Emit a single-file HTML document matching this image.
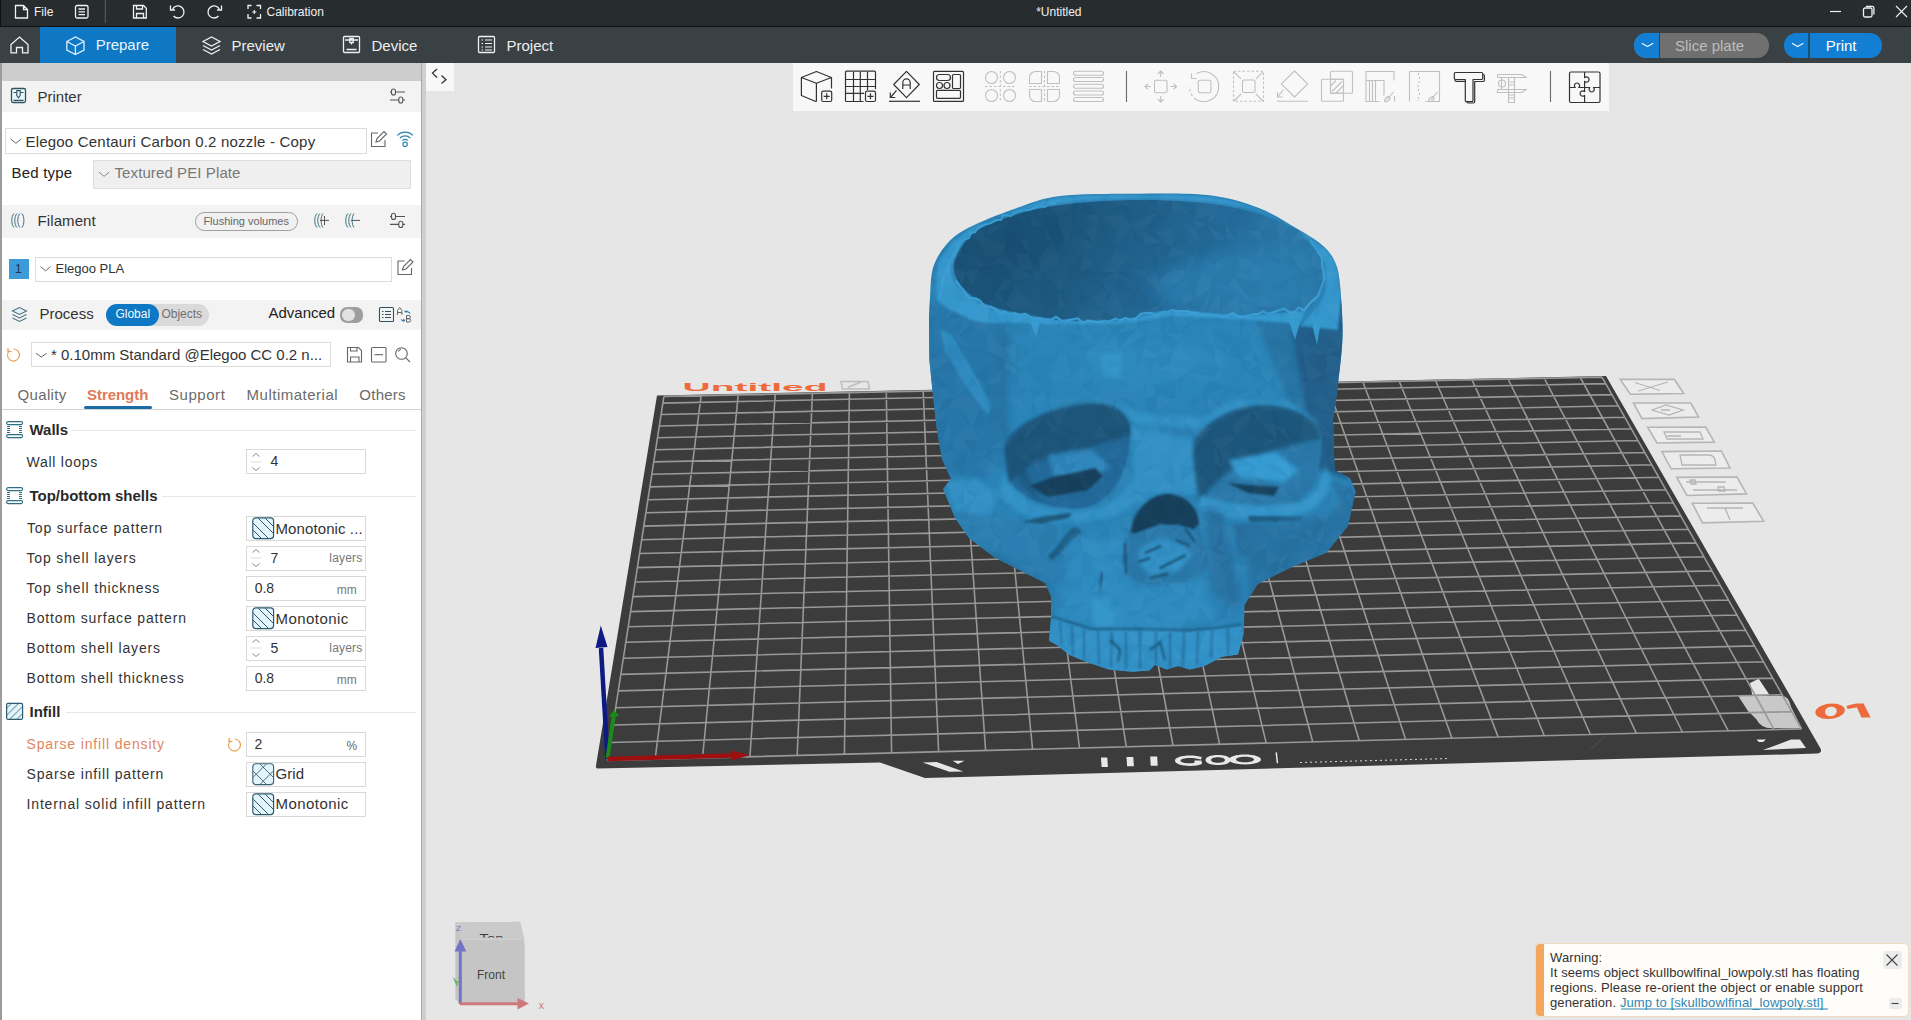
<!DOCTYPE html>
<html><head><meta charset="utf-8"><style>
*{margin:0;padding:0;box-sizing:border-box}
html,body{width:1911px;height:1020px;overflow:hidden;background:#e6e6e6;font-family:"Liberation Sans",sans-serif}
.a{position:absolute}
.t{position:absolute;line-height:1;white-space:nowrap}
svg{position:absolute;overflow:visible}
</style></head><body>
<!-- title bar -->
<div class="a" style="left:0;top:0;width:1911px;height:26px;background:#272c2f"></div>
<div class="a" style="left:0;top:25.5px;width:1911px;height:1.5px;background:#0d0f10"></div>
<div class="a" style="left:0;top:0;width:1px;height:26px;background:#111"></div>
<svg style="left:0;top:0" width="1911" height="26" fill="none" stroke="#f2f2f2" stroke-width="1.3">
  <!-- file -->
  <path d="M15.5 5.5h8l4 4v8.5h-12z M23.5 5.5v4h4"/>
  <!-- menu -->
  <rect x="75.5" y="5.5" width="12.5" height="12.5" rx="1.5"/>
  <path d="M78.5 9h6.5M78.5 11.8h6.5M78.5 14.6h6.5"/>
  <path d="M105.3 0v23" stroke="#5a5f62" stroke-width="1"/>
  <!-- save -->
  <path d="M133.5 5.5h10l2.8 2.8v9.7h-12.8z M136.5 5.5v3.5h6v-3.5 M136.5 18v-4.5h7v4.5"/>
  <!-- undo -->
  <path d="M172.5 9.5a6 6 0 1 1 1 6.5"/><path d="M170.5 5.5v4.5h4.5"/>
  <!-- redo -->
  <path d="M219.5 9.5a6 6 0 1 0 -1 6.5"/><path d="M221.5 5.5v4.5h-4.5"/>
  <!-- calibration -->
  <path d="M248 9v-3.5h3.5M256.5 5.5h4v3.5M260.5 14v4h-4M251.5 18h-3.5v-4"/>
  <path d="M254.3 10v4M252.3 12h4" stroke-width="1.1"/>
  <!-- window controls -->
  <path d="M1830 11.5h11" stroke-width="1.2"/>
  <rect x="1863.5" y="8" width="8.5" height="9" rx="1.5"/>
  <path d="M1866 6.3h6.3a1.6 1.6 0 0 1 1.6 1.6v6.6"/>
  <path d="M1896 6l11 11M1907 6l-11 11" stroke-width="1.1"/>
</svg>
<div class="t" style="left:34px;top:5.84px;font-size:12px;color:#f2f2f2;">File</div>

<div class="t" style="left:266.5px;top:5.84px;font-size:12px;color:#f2f2f2;">Calibration</div>

<div class="t" style="left:1036.2px;top:5.84px;font-size:12px;color:#f2f2f2;">*Untitled</div>

<!-- tab bar -->
<div class="a" style="left:0;top:27px;width:1911px;height:36px;background:#394145"></div>
<div class="a" style="left:40px;top:27px;width:136px;height:36px;background:#0f78c4"></div>
<svg style="left:0;top:27px" width="1911" height="36" fill="none" stroke="#f0f0f0" stroke-width="1.3">
  <!-- home -->
  <path d="M11 25.8v-8.3l8.5-7.5 8.5 7.5v8.3h-5.5v-5.3h-6v5.3z"/>
  <!-- prepare cube -->
  <path d="M66.8 14.5l8.6-4.5 8.6 4.5v8.5l-8.6 4.5-8.6-4.5z M66.8 14.5l8.6 4.5 8.6-4.5 M75.4 19v8.5" stroke="#d8f0ff"/>
  <!-- preview layers -->
  <path d="M203 14.5l8.5-4.5 8.5 4.5-8.5 4.5z M203 18.5l8.5 4.5 8.5-4.5 M203 22.5l8.5 4.5 8.5-4.5"/>
  <!-- device -->
  <rect x="343.5" y="9.5" width="16" height="16" rx="1"/>
  <path d="M346.5 22.5h10 M345 13h13 M349.8 11.5h3.4v4h-3.4z M351.5 15.5v2"/>
  <!-- project -->
  <rect x="478.5" y="9.5" width="16" height="16" rx="1"/>
  <path d="M481.5 13h1.5M485 13h7M481.5 16.5h1.5M485 16.5h7M481.5 20h1.5M485 20h7M481.5 23h1.5M485 23h7" stroke-width="1.1"/>
</svg>
<div class="t" style="left:95.7px;top:36.90px;font-size:15px;color:#e6f6ff;">Prepare</div>

<div class="t" style="left:231.5px;top:37.60px;font-size:15px;color:#eeeeee;">Preview</div>

<div class="t" style="left:371.5px;top:37.60px;font-size:15px;color:#eeeeee;">Device</div>

<div class="t" style="left:506.5px;top:37.60px;font-size:15px;color:#eeeeee;">Project</div>

<!-- slice / print buttons -->
<div class="a" style="left:1634px;top:33px;width:135px;height:24.5px;border-radius:12.25px;background:#707070;overflow:hidden">
  <div class="a" style="left:0;top:0;width:24.5px;height:24.5px;background:#127fd4"></div>
  <div class="a" style="left:24.5px;top:0;width:1.5px;height:24.5px;background:#394145"></div>
</div>
<div class="a" style="left:1784px;top:33px;width:98px;height:24.5px;border-radius:12.25px;background:#127fd4;overflow:hidden">
  <div class="a" style="left:24px;top:0;width:1.5px;height:24.5px;background:#1e4e70"></div>
</div>
<svg style="left:0;top:0" width="1911" height="63" fill="none" stroke="#e8f4ff" stroke-width="1.2">
  <path d="M1641.8 43.3l5.7 3.2 5.7-3.2M1792 43.3l5.7 3.2 5.7-3.2"/>
</svg>
<div class="t" style="left:1675px;top:37.60px;font-size:15px;color:#bdbdbd;">Slice plate</div>

<div class="t" style="left:1825.7px;top:37.60px;font-size:15px;color:#ffffff;">Print</div>

<!-- left panel -->
<div class="a" style="left:0;top:63px;width:421px;height:957px;background:#ffffff"></div>
<div class="a" style="left:0;top:63px;width:1.5px;height:957px;background:#9c9c9c"></div>
<div class="a" style="left:421px;top:63px;width:1.3px;height:957px;background:#a9a9a9"></div>
<div class="a" style="left:422.3px;top:63px;width:3.7px;height:957px;background:#cfcfcf"></div>
<div class="a" style="left:1.5px;top:63px;width:419.5px;height:18.3px;background:#cdcdcd"></div>
<!-- headers -->
<div class="a" style="left:1.5px;top:81.3px;width:419.5px;height:30.7px;background:#f3f3f3"></div>
<div class="a" style="left:1.5px;top:205.3px;width:419.5px;height:32.3px;background:#f3f3f3"></div>
<div class="a" style="left:1.5px;top:300px;width:419.5px;height:30.2px;background:#f3f3f3"></div>
<!-- printer combo -->
<div class="a" style="left:4.5px;top:128.2px;width:362.3px;height:25.6px;border:1px solid #dcdcdc;background:#fff"></div>
<div class="a" style="left:93px;top:159.5px;width:317.7px;height:29.1px;border:1px solid #dedede;background:#efefef"></div>
<!-- flushing pill -->
<div class="a" style="left:195px;top:212.2px;width:102.7px;height:18.5px;border:1px solid #a0a0a0;border-radius:9.25px;background:#f1f1f1"></div>
<!-- filament combo -->
<div class="a" style="left:9px;top:259.3px;width:20px;height:19.4px;background:#3c9bd8"></div>
<div class="a" style="left:34.5px;top:256.5px;width:357.3px;height:25px;border:1px solid #dcdcdc;background:#fff"></div>
<!-- global/objects toggle -->
<div class="a" style="left:106px;top:304.1px;width:102.5px;height:22px;border-radius:11px;background:#dadada"></div>
<div class="a" style="left:106px;top:304.1px;width:52.5px;height:22px;border-radius:11px;background:#0f78c4"></div>
<!-- advanced switch -->
<div class="a" style="left:340px;top:307px;width:23px;height:16px;border-radius:7px;background:#9e9e9e"></div>
<div class="a" style="left:342px;top:309px;width:12.5px;height:12px;border-radius:6px;background:#e2e2e2"></div>
<!-- preset combo -->
<div class="a" style="left:30.5px;top:342.4px;width:300.2px;height:24.9px;border:1px solid #dcdcdc;background:#fff"></div>
<!-- tabs -->
<div class="a" style="left:2px;top:409px;width:419px;height:1.2px;background:#d2d2d2"></div>
<div class="a" style="left:84px;top:406.2px;width:67.8px;height:3.2px;border-radius:1.6px;background:#1b6da8"></div>
<!-- section separators -->
<div class="a" style="left:72px;top:430px;width:344px;height:1px;background:#e8e8e8"></div>
<div class="a" style="left:162px;top:496px;width:254px;height:1px;background:#e8e8e8"></div>
<div class="a" style="left:66px;top:711.5px;width:350px;height:1px;background:#e8e8e8"></div>
<!-- inputs -->
<div class="a" style="left:246.3px;top:449.3px;width:119.5px;height:25px;border:1px solid #d9d9d9"></div>
<div class="a" style="left:246.3px;top:515.5px;width:119.5px;height:25px;border:1px solid #d9d9d9"></div>
<div class="a" style="left:246.3px;top:545.5px;width:119.5px;height:25px;border:1px solid #d9d9d9"></div>
<div class="a" style="left:246.3px;top:575.5px;width:119.5px;height:25px;border:1px solid #d9d9d9"></div>
<div class="a" style="left:246.3px;top:605.5px;width:119.5px;height:25px;border:1px solid #d9d9d9"></div>
<div class="a" style="left:246.3px;top:635.5px;width:119.5px;height:25px;border:1px solid #d9d9d9"></div>
<div class="a" style="left:246.3px;top:665.5px;width:119.5px;height:25px;border:1px solid #d9d9d9"></div>
<div class="a" style="left:246.3px;top:731.5px;width:119.5px;height:25px;border:1px solid #d9d9d9"></div>
<div class="a" style="left:246.3px;top:761.5px;width:119.5px;height:25px;border:1px solid #d9d9d9"></div>
<div class="a" style="left:246.3px;top:791.5px;width:119.5px;height:25px;border:1px solid #d9d9d9"></div>
<svg style="left:0;top:0" width="430" height="1020" fill="none" stroke-width="1.2">
  <defs>
    <pattern id="hatch" width="5" height="5" patternUnits="userSpaceOnUse" patternTransform="rotate(45)">
      <rect width="5" height="5" fill="#e3f5fc"/><path d="M0 0v5" stroke="#2f5a6e" stroke-width="1.1"/>
    </pattern>
    <g id="pat_mono">
      <rect x="0.6" y="0.6" width="20.8" height="20.8" rx="3" fill="#e3f5fc" stroke="#2f5a6e" stroke-width="1.2"/>
      <path d="M1 6l15 15M1 13l8 8M6 1l15 15M13 1l8 8" stroke="#2f5a6e" stroke-width="1"/>
    </g>
    <g id="pat_grid">
      <rect x="0.6" y="0.6" width="20.8" height="20.8" rx="3" fill="#e3f5fc" stroke="#3d6070" stroke-width="1.1"/>
      <path d="M1 8l13 13M8 1l13 13M1 14l13-13M8 21l13-13" stroke="#3d6070" stroke-width="0.9"/>
    </g>
    <g id="spin">
      <path d="M0 4l3.5-3 3.5 3M0 15l3.5 3 3.5-3" stroke="#8a8a8a" stroke-width="1"/>
      <path d="M-2 9.5h11" stroke="#d8d8d8" stroke-width="1"/>
    </g>
    <g id="secicon">
      <rect x="0.6" y="0.6" width="16" height="3" rx="1.5" stroke="#2d6f82" stroke-width="1.1"/>
      <rect x="0.6" y="13.6" width="16" height="3" rx="1.5" stroke="#2d6f82" stroke-width="1.1"/>
      <path d="M1 5.5h3M1 7.5h3M1 9.5h3M1 11.5h3M13 5.5h3M13 7.5h3M13 9.5h3M13 11.5h3" stroke="#2d6f82" stroke-width="1"/>
    </g>
  </defs>
  <!-- printer icon -->
  <rect x="11.5" y="88.5" width="14" height="14" rx="1.5" fill="#e8f6fb" stroke="#2f5361" stroke-width="1.3"/>
  <path d="M13.5 92.5h3M20.5 92.5h3M13.5 100.4h10" stroke="#2f5361" stroke-width="1.1"/>
  <path d="M16.8 90.6h3.4v5l-1.7 2.3-1.7-2.3z" stroke="#2f5361" stroke-width="1.1" fill="#e8f6fb"/>
  <!-- sliders -->
  <g stroke="#555" stroke-width="1.1">
    <path d="M390 92h15M390 100h15"/><rect x="391.5" y="89" width="4" height="6" rx="2" fill="#f3f3f3"/><rect x="398.8" y="97" width="4" height="6" rx="2" fill="#f3f3f3"/>
    <path d="M390 216.5h15M390 224.4h15"/><rect x="391.5" y="213.2" width="4" height="6.3" rx="2" fill="#f3f3f3"/><rect x="398.8" y="221.2" width="4" height="6.3" rx="2" fill="#f3f3f3"/>
  </g>
  <!-- edit icons -->
  <g stroke="#666" stroke-width="1.1">
    <path d="M378 133h-6.5v13.5h13.5v-6.5"/><path d="M376 142l1-3.5 7-7 2.5 2.5-7 7z"/>
    <path d="M404.5 261h-6.5v13.5h13.5v-6.5"/><path d="M402.5 270l1-3.5 7-7 2.5 2.5-7 7z"/>
  </g>
  <!-- wifi -->
  <g stroke="#2e86b0" stroke-width="1.2">
    <path d="M397.3 135.3a11 11 0 0 1 15.6 0M399.9 138a7.4 7.4 0 0 1 10.4 0M402.4 140.6a3.8 3.8 0 0 1 5.4 0"/>
    <circle cx="405.1" cy="144.3" r="2.2"/>
  </g>
  <!-- combo chevrons -->
  <g stroke="#666" stroke-width="1">
    <path d="M10.6 139l5.3 4.3 5.3-4.3"/>
    <path d="M98.8 172l5.3 4.3 5.3-4.3" stroke="#888"/>
    <path d="M40.5 266.6l5 4.2 5-4.2"/>
    <path d="M36 353.3l5.3 3.7 5.3-3.7"/>
  </g>
  <!-- filament icon -->
  <g stroke="#3a6f80" stroke-width="1">
    <path d="M14 213.5c-3 3-3 11 0 14M17 213.5c-3 3-3 11 0 14M20 213.5c-3 3-3 11 0 14M22 213.5c2.5 3 2.5 11 0 14"/>
    <path d="M317 213.5c-3 3-3 11 0 14M320 213.5c-3 3-3 11 0 14M323 213.5c-2.5 3-2.5 11 0 14" />
    <path d="M320 220.4h9M324.5 216v9" stroke="#555"/>
    <path d="M348 213.5c-3 3-3 11 0 14M351 213.5c-3 3-3 11 0 14M354 213.5c-2.5 3-2.5 11 0 14"/>
    <path d="M351 220.4h9" stroke="#555"/>
  </g>
  <!-- process icon -->
  <g stroke="#4d6f7c" stroke-width="1.1">
    <path d="M12.5 311l7-3.5 7 3.5-7 3.5z" fill="#e3f5fc"/><path d="M12.5 314.5l7 3.5 7-3.5M12.5 318l7 3.5 7-3.5"/>
  </g>
  <!-- list / AB icons -->
  <g stroke="#2f5361" stroke-width="1.1">
    <rect x="379.5" y="307.5" width="14" height="14" rx="1"/>
    <path d="M382 311.5h1.5M385 311.5h6M382 314.5h1.5M385 314.5h6M382 317.5h1.5M385 317.5h6"/>
  </g>
  <g stroke="#1e7bb0" stroke-width="1.1"><path d="M406 312a3 3 0 0 1 4 1.5M404.5 311l1.5 1 1-1.5M401 319.5a3 3 0 0 0 3.5 1M403 321.5l1.5-1-1.2-1.5"/></g>
  <g stroke="#666" stroke-width="1"><path d="M397.5 315v-4.5l2.2-3 2.2 3v4.5M397.5 312.5h4.4"/><path d="M406.5 315.5v6.5h2.5a1.6 1.6 0 0 0 0-3.3h-2.5h2.3a1.5 1.5 0 0 0 0-3.2z"/></g>
  <!-- preset reset icon -->
  <g stroke="#e8a050" stroke-width="1.2"><path d="M9.5 350.5a6 6 0 1 0 4-1.5"/><path d="M8 348v3.5h3.5"/></g>
  <g stroke="#666" stroke-width="1.1">
    <path d="M347.5 347.5h11l3 3v11.5h-14z M350.5 347.5v3.5h6.5v-3.5 M350.5 362v-5h8.5v5"/>
    <rect x="371.5" y="347.5" width="14.5" height="14.5" rx="1"/><path d="M374.5 354.7h8.5"/>
    <circle cx="401.5" cy="353.5" r="5.8"/><path d="M405.8 357.8l4.2 4.2M398.5 351.5a3.5 3.5 0 0 1 2.5-2"/>
  </g>
  <!-- section icons -->
  <use href="#secicon" x="6" y="421"/>
  <use href="#secicon" x="6" y="487"/>
  <rect x="6.6" y="703.4" width="16" height="16" rx="1.5" fill="url(#hatch)" stroke="#2f5a6e" stroke-width="1.2"/>
  <!-- spinners -->
  <use href="#spin" x="252.5" y="452.5"/>
  <use href="#spin" x="252.5" y="548.5"/>
  <use href="#spin" x="252.5" y="638.5"/>
  <!-- pattern icons -->
  <use href="#pat_mono" x="252.2" y="517.2"/>
  <use href="#pat_mono" x="252.2" y="607.2"/>
  <use href="#pat_grid" x="252.2" y="763.2"/>
  <use href="#pat_mono" x="252.2" y="793.2"/>
  <!-- sparse reset -->
  <g stroke="#e8a050" stroke-width="1.2"><path d="M230.5 740.5a6 6 0 1 0 4-1.5"/><path d="M229 738v3.5h3.5"/></g>
</svg>
<div class="t" style="left:37.5px;top:88.50px;font-size:15px;color:#333;">Printer</div>

<div class="t" style="left:25.5px;top:133.50px;font-size:15px;color:#333;letter-spacing:0.2px;">Elegoo Centauri Carbon 0.2 nozzle - Copy</div>

<div class="t" style="left:11.5px;top:165.10px;font-size:15px;color:#222;letter-spacing:0.2px;">Bed type</div>

<div class="t" style="left:114.5px;top:165.10px;font-size:15px;color:#777;letter-spacing:0.1px;">Textured PEI Plate</div>

<div class="t" style="left:37.5px;top:213.20px;font-size:15px;color:#333;letter-spacing:0.1px;">Filament</div>

<div class="t" style="left:203.4px;top:215.69px;font-size:11px;color:#666;">Flushing volumes</div>

<div class="t" style="left:15px;top:263.34px;font-size:12px;color:#1a3550;">1</div>

<div class="t" style="left:55.5px;top:262.00px;font-size:13px;color:#333;">Elegoo PLA</div>

<div class="t" style="left:39.5px;top:305.90px;font-size:15px;color:#333;">Process</div>

<div class="t" style="left:115.4px;top:308.44px;font-size:12px;color:#f2f8ff;">Global</div>

<div class="t" style="left:161.4px;top:308.44px;font-size:12px;color:#707070;">Objects</div>

<div class="t" style="left:268.5px;top:305.30px;font-size:15px;color:#222;">Advanced</div>

<div class="t" style="left:51px;top:347.30px;font-size:15px;color:#333;">* 0.10mm Standard @Elegoo CC 0.2 n...</div>

<div class="t" style="left:17.5px;top:387.30px;font-size:15px;color:#6b6b6b;letter-spacing:0.35px;">Quality</div>

<div class="t" style="left:87px;top:387.30px;font-size:15px;color:#e07a5a;font-weight:bold;letter-spacing:-0.05px;">Strength</div>

<div class="t" style="left:169px;top:387.30px;font-size:15px;color:#6b6b6b;letter-spacing:0.55px;">Support</div>

<div class="t" style="left:246.6px;top:387.30px;font-size:15px;color:#6b6b6b;letter-spacing:0.5px;">Multimaterial</div>

<div class="t" style="left:359.3px;top:387.30px;font-size:15px;color:#6b6b6b;letter-spacing:0.25px;">Others</div>

<div class="t" style="left:29.5px;top:422.30px;font-size:15px;color:#2a2a2a;font-weight:bold;">Walls</div>

<div class="t" style="left:26.5px;top:454.95px;font-size:14px;color:#333;letter-spacing:0.75px;">Wall loops</div>

<div class="t" style="left:270.5px;top:454.25px;font-size:14px;color:#333;">4</div>

<div class="t" style="left:29.5px;top:487.70px;font-size:15px;color:#2a2a2a;font-weight:bold;">Top/bottom shells</div>

<div class="t" style="left:27px;top:520.75px;font-size:14px;color:#333;letter-spacing:0.85px;">Top surface pattern</div>

<div class="t" style="left:275.5px;top:520.70px;font-size:15px;color:#333;letter-spacing:0.1px;">Monotonic ...</div>

<div class="t" style="left:26.5px;top:550.75px;font-size:14px;color:#333;letter-spacing:0.85px;">Top shell layers</div>

<div class="t" style="left:270.5px;top:551.05px;font-size:14px;color:#333;">7</div>

<div class="t" style="left:329.3px;top:551.84px;font-size:12px;color:#777;letter-spacing:0.2px;">layers</div>

<div class="t" style="left:26.5px;top:580.75px;font-size:14px;color:#333;letter-spacing:0.85px;">Top shell thickness</div>

<div class="t" style="left:254.7px;top:580.85px;font-size:14px;color:#333;">0.8</div>

<div class="t" style="left:336.7px;top:583.84px;font-size:12px;color:#777;">mm</div>

<div class="t" style="left:26.5px;top:610.75px;font-size:14px;color:#333;letter-spacing:0.85px;">Bottom surface pattern</div>

<div class="t" style="left:275.5px;top:610.70px;font-size:15px;color:#333;letter-spacing:0.45px;">Monotonic</div>

<div class="t" style="left:26.5px;top:640.75px;font-size:14px;color:#333;letter-spacing:0.85px;">Bottom shell layers</div>

<div class="t" style="left:270.5px;top:641.05px;font-size:14px;color:#333;">5</div>

<div class="t" style="left:329.3px;top:641.84px;font-size:12px;color:#777;letter-spacing:0.2px;">layers</div>

<div class="t" style="left:26.5px;top:670.75px;font-size:14px;color:#333;letter-spacing:0.85px;">Bottom shell thickness</div>

<div class="t" style="left:254.7px;top:670.85px;font-size:14px;color:#333;">0.8</div>

<div class="t" style="left:336.7px;top:673.84px;font-size:12px;color:#777;">mm</div>

<div class="t" style="left:29.5px;top:703.80px;font-size:15px;color:#2a2a2a;font-weight:bold;">Infill</div>

<div class="t" style="left:26.5px;top:736.55px;font-size:14px;color:#e0865e;letter-spacing:0.85px;">Sparse infill density</div>

<div class="t" style="left:254.5px;top:736.55px;font-size:14px;color:#333;">2</div>

<div class="t" style="left:346.5px;top:739.64px;font-size:12px;color:#666;">%</div>

<div class="t" style="left:26.5px;top:766.75px;font-size:14px;color:#333;letter-spacing:0.85px;">Sparse infill pattern</div>

<div class="t" style="left:275.5px;top:765.90px;font-size:15px;color:#333;letter-spacing:0.1px;">Grid</div>

<div class="t" style="left:26.5px;top:796.55px;font-size:14px;color:#333;letter-spacing:0.85px;">Internal solid infill pattern</div>

<div class="t" style="left:275.5px;top:795.90px;font-size:15px;color:#333;letter-spacing:0.45px;">Monotonic</div>

<!-- collapse button -->
<div class="a" style="left:426px;top:63px;width:28px;height:28px;background:#f8f8f8"></div>
<svg style="left:0;top:0" width="1911" height="1020" fill="none">
  <path d="M437 69l-4.5 4.1 4.5 4.4M441.5 75.5l4.5 4.3-4.5 3.7" stroke="#333" stroke-width="1.3"/>
</svg>
<!-- toolbar -->
<div class="a" style="left:793px;top:63px;width:816px;height:47.7px;background:#f8f8f8"></div>
<svg style="left:0;top:0" width="1911" height="120" fill="none" stroke-width="1.2" stroke-linejoin="round">
  <g stroke="#333">
    <!-- add cube -->
    <path d="M816.4 71.5l-15 6v18l15 6.2 M801.4 77.5l15 5.8 15-5.8-15-6 M816.4 83.3v18.2 M831.5 77.5v11"/>
    <rect x="821.7" y="91.2" width="10" height="10.3" rx="1.5"/><path d="M826.7 93.3v6M823.7 96.3h6"/>
    <!-- add plate -->
    <path d="M863.5 101.5h-17a1 1 0 0 1-1-1v-28.3a1 1 0 0 1 1-1h28a1 1 0 0 1 1 1v17"/>
    <path d="M853.5 72v29M860.3 72v29M867.5 72v18M846 79.5h29M846 86.5h29M846 93.3h18"/>
    <rect x="865.5" y="91.2" width="10" height="10.3" rx="1.5"/><path d="M870.5 93.3v6M867.5 96.3h6"/>
    <!-- auto orient -->
    <path d="M906.5 71.3l12.8 13.2-12.8 13.2-12.8-13.2z"/>
    <path d="M902.8 89v-6.5a3.7 3.7 0 0 1 7.4 0v6.5M902.8 85h7.4"/>
    <path d="M896.5 90.3l-6 7.2M890.3 92.5v5h5"/><path d="M889 101.3h31"/>
    <!-- arrange -->
    <rect x="933.5" y="71.4" width="30" height="30" rx="1"/>
    <rect x="936.5" y="74.5" width="14" height="6" rx="3"/><rect x="952.5" y="74.5" width="8" height="14" rx="1"/>
    <circle cx="939.5" cy="85.5" r="3"/><circle cx="947" cy="85.5" r="3"/><rect x="936.5" y="90.3" width="24" height="8" rx="1"/>
    <!-- separators -->
    <path d="M1126.5 71v31M1550.5 71v31" stroke="#6a6a6a" stroke-width="1.1"/>
  </g>
  <g stroke="#c0c0c0" stroke-width="1.1">
    <!-- split objects -->
    <circle cx="991.5" cy="77.5" r="6"/><circle cx="1009.5" cy="77.5" r="6"/><circle cx="991.5" cy="95.5" r="6"/><circle cx="1009.5" cy="95.5" r="6"/>
    <path d="M1000.3 71v31M985 86.5h31" stroke-dasharray="2.5 2"/>
    <!-- split parts -->
    <path d="M1041.5 71.5h-6a6 6 0 0 0-6 6v6h12zM1047.5 71.5h6a6 6 0 0 1 6 6v6h-12zM1041.5 101.5h-6a6 6 0 0 1-6-6v-6h12zM1047.5 101.5h6a6 6 0 0 0 6-6v-6h-12z"/>
    <path d="M1044.5 71v31M1029 86.5h31" stroke-dasharray="2.5 2"/>
    <!-- layers -->
    <rect x="1073.5" y="71.3" width="30" height="4" rx="2"/><rect x="1073.5" y="77.5" width="30" height="4" rx="2"/><rect x="1073.5" y="84.3" width="30" height="4" rx="2"/><rect x="1073.5" y="91" width="30" height="4" rx="2"/><rect x="1073.5" y="97.5" width="30" height="4" rx="2"/>
    <!-- move -->
    <rect x="1154.5" y="80.2" width="12.5" height="12.5" rx="1.5"/>
    <path d="M1160.7 77v-6M1157.8 74l2.9-3 2.9 3M1160.7 96v6M1157.8 99l2.9 3 2.9-3M1151 86.5h-6M1148 83.6l-3 2.9 3 2.9M1170.5 86.5h6M1173.5 83.6l3 2.9-3 2.9"/>
    <!-- rotate -->
    <rect x="1198.3" y="80.2" width="12.6" height="12.5" rx="1.5"/>
    <path d="M1196.5 73.5A15 15 0 1 1 1196 99.5"/><path d="M1196 99.5A15 15 0 0 1 1189.6 86" stroke-dasharray="2.5 2.5"/><path d="M1191.5 73.5v5h5"/>
    <!-- scale -->
    <rect x="1242.5" y="80" width="12.5" height="12.5" rx="1.5"/>
    <rect x="1233.5" y="71.3" width="30" height="30" stroke-dasharray="2.5 2"/>
    <path d="M1234 71.8l7 7M1263 71.8l-7 7M1234 101l7-7M1263 101l-7-7"/>
    <!-- lay on face -->
    <path d="M1294.5 71l13.2 12.8-13.2 13.2-13.2-13.2z"/><path d="M1283.5 89.5l-6 7.5M1277.5 92v5h5M1277 101.3h31"/>
    <!-- cut -->
    <rect x="1330.5" y="71.3" width="22" height="22" rx="1"/><rect x="1321.5" y="79.3" width="22" height="22" rx="1"/>
    <path d="M1330.5 93.3v-14h13v14z M1332 91.5l10-10M1336 93l7-7M1330.5 86l5.5-5.5"/>
    <!-- support paint -->
    <path d="M1366 101.5v-30h28v9M1366 80.5h18v15M1369.5 81v20.5M1372.5 81v20.5M1375.5 81v20.5M1365.5 101.5h14"/>
    <path d="M1386.5 100l7-8M1384.5 101.5c0-3 2-5 4-5l1.5 1.5c0 2-2 4-5 3.5z"/><path d="M1394.5 96v5.5"/>
    <!-- seam paint -->
    <path d="M1409.5 101.5v-30h30v30h-14M1439.5 92v9.5"/>
    <path d="M1418.5 73v2M1419.5 77v2M1419 81v2M1418 85v2M1418.5 89v2M1419.5 93v2M1418.5 97v2M1418 100v1"/>
    <path d="M1430.5 100l7-8M1428.5 101.5c0-3 2-5 4-5l1.5 1.5c0 2-2 4-5 3.5z"/>
    <!-- measure -->
    <path d="M1497.5 74.5h24l5 3h-29zM1497.5 89.5h29l-5 3h-24zM1501.5 77.5v12M1508.5 77.5v25h6v-25M1508.5 82h6M1508.5 85h6M1508.5 95h6M1508.5 98h6"/>
    <circle cx="1502" cy="83.5" r="3.5"/>
  </g>
  <g stroke="#333" stroke-width="1.2">
    <!-- text T -->
    <path d="M1455.5 72.5h26a1.2 1.2 0 0 1 1.2 1.2v4.6a1.2 1.2 0 0 1-1.2 1.2h-8.5v21a1.2 1.2 0 0 1-1.2 1.2h-5.3a1.2 1.2 0 0 1-1.2-1.2v-21h-9.8a1.2 1.2 0 0 1-1.2-1.2v-4.6a1.2 1.2 0 0 1 1.2-1.2z"/>
    <path d="M1482.7 74.5h.5a1.2 1.2 0 0 1 1.2 1.2v4.6a1.2 1.2 0 0 1-1.2 1.2h-8.5v19.5M1467 101.5v.3a1.2 1.2 0 0 0 1.2 1.2h5.3a1.2 1.2 0 0 0 1.2-1.2v-1.5M1455 79.5v.7a1.2 1.2 0 0 0 1.2 1.2h9.8"/>
    <!-- puzzle -->
    <rect x="1569.5" y="72" width="30.5" height="30.5" rx="1.5"/>
    <path d="M1584.6 72v5.7A2.6 2.6 0 1 1 1584.6 81.3V91.7A2.6 2.6 0 1 0 1584.6 95.3V102.5M1569.5 87.5H1575.2A2.6 2.6 0 1 1 1578.8 87.5H1589.9A2.6 2.6 0 1 0 1593.5 87.5H1600"/>
  </g>
</svg>

<!-- 3D scene -->
<svg style="left:0;top:0" width="1911" height="1020">
  <!-- plate -->
  <path d="M657 395.5L1606 376L1820.5 748.5Q1822.5 753 1817 753.6L925 778L880 762.6L597.5 768.4Q595.5 768.4 596 765.5Z" fill="#3c3c3c"/>
  <path d="M1750 683l8.7-4.3 10.7 16.1h-17.2z" fill="#e6e6e6"/>
  <path d="M1738.2 696h44.2q6 0 8.6 10.7l10.8 21.6h-30.2q-11 0-15-8.7l-8.6-8.6z" fill="#c8c8c8"/>
  <path d="M607.5 760.5L663.9 396.4M655.1 759.3L701.1 395.7M702.5 758.0L738.2 394.9M749.9 756.7L775.3 394.1M797.2 755.5L812.4 393.4M844.4 754.2L849.4 392.6M891.6 753.0L886.3 391.8M938.6 751.7L923.2 391.1M985.6 750.5L960.1 390.3M1032.6 749.3L996.9 389.6M1079.5 748.0L1033.7 388.8M1126.3 746.8L1070.5 388.0M1173.0 745.5L1107.2 387.3M1219.6 744.3L1143.8 386.5M1266.2 743.1L1180.4 385.8M1312.7 741.8L1217.0 385.0M1359.2 740.6L1253.5 384.3M1405.6 739.4L1290.0 383.5M1451.9 738.1L1326.5 382.7M1498.1 736.9L1362.9 382.0M1544.3 735.7L1399.2 381.2M1590.4 734.5L1435.5 380.5M1636.4 733.3L1471.8 379.7M1682.4 732.0L1508.0 379.0M1728.3 730.8L1544.2 378.2M1774.1 729.6L1580.3 377.5M1801.5 728.9L1602.0 377.1M607.5 760.5L1801.5 728.9M610.3 742.5L1791.7 711.6M613.0 725.0L1782.1 694.7M615.7 707.7L1772.7 678.1M618.3 690.9L1763.5 661.8M620.9 674.4L1754.5 645.9M623.4 658.2L1745.6 630.3M625.8 642.3L1736.9 615.0M628.2 626.8L1728.4 600.0M630.6 611.6L1720.1 585.3M632.9 596.6L1711.9 570.9M635.2 582.0L1703.9 556.7M637.4 567.6L1696.0 542.9M639.6 553.5L1688.3 529.2M641.7 539.7L1680.7 515.9M643.8 526.1L1673.3 502.7M645.9 512.8L1666.0 489.8M647.9 499.7L1658.8 477.2M649.9 486.9L1651.7 464.8M651.8 474.3L1644.8 452.5M653.7 461.9L1638.0 440.5M655.6 449.7L1631.3 428.8M657.5 437.8L1624.7 417.2M659.3 426.0L1618.3 405.8M661.1 414.5L1611.9 394.6M662.8 403.1L1605.7 383.6M663.9 396.4L1602.0 377.1" stroke="#989898" stroke-width="1.6" fill="none"/>
  <!-- plate front slots -->
  <path d="M922.6 762.5l14-0.5 26.8 9.5-14 0.3z M952.6 760.8h11.9l-6.5 3.2z" fill="#e8e8e8"/>
  <path d="M1763 750L1791 739.5L1800 739.5L1806 748Z M1756.5 739.5h9.5l-3 2.5h-4z" fill="#e8e8e8"/>
  <!-- ELEGOO letters -->
  <g fill="#e8e8e8">
    <path d="M1101 757.5h6.3l.6 9.5h-6.3z M1126.5 757h6.8l.6 9.3h-6.8z M1150.2 756.5h7l.5 9.3h-7z"/>
    <path d="M1190 755.5c-9 0-15 2.2-15 5.2s6 5.2 15 5.2c5 0 9-.8 12-2l-.5-3.5h-7v2.3c-1.3.4-3 .6-4.5.6-6 0-9.5-1.2-9.5-2.6s3.5-2.6 9.5-2.6c4 0 8 .6 11 1.5l.8-2.6c-3-.9-7-1.5-11.8-1.5z"/>
    <path d="M1218 755c-8 0-12.5 2.2-12.5 5s4.5 5 12.5 5 12.5-2.2 12.5-5-4.5-5-12.5-5zm0 2.3c4.5 0 7 1.2 7 2.7s-2.5 2.7-7 2.7-7-1.2-7-2.7 2.5-2.7 7-2.7z"/>
    <path d="M1245 754.5c-9 0-16 2.2-16 5s7 5 16 5 16-2.2 16-5-7-5-16-5zm0 2.3c5.5 0 9 1.2 9 2.7s-3.5 2.7-9 2.7-9-1.2-9-2.7 3.5-2.7 9-2.7z"/>
    <path d="M1275.5 752.5l1.5-.3 1.2 11h-1.5z"/>
  </g>
  <path d="M1300 762.5l150-4" stroke="#d8d8d8" stroke-width="1" stroke-dasharray="2 3"/>
  <path d="M1591 749l14-13" stroke="#555" stroke-width="1"/>
  <!-- axes -->
  <path d="M607.5 758.8L601 648" stroke="#0c1a82" stroke-width="4.5"/>
  <path d="M595.5 648L600.8 625.5L607.5 647z" fill="#0c1a82"/>
  <path d="M607.5 758L613.8 716" stroke="#1a8a1a" stroke-width="4"/>
  <path d="M609 717l5-7 5.5 6z" fill="#1a8a1a"/>
  <path d="M607.5 759L733 755.5" stroke="#9e1010" stroke-width="4.5"/>
  <path d="M731 750.5L750 755.3L731 760.5z" fill="#9e1010"/>
  <!-- Untitled label -->
  <text x="682.6" y="390.8" font-family="Liberation Sans" font-weight="bold" font-size="13.5" fill="#ee6a3a" textLength="145" lengthAdjust="spacingAndGlyphs" transform="translate(0,78.16) scale(1,0.8)">Untitled</text>
  <path d="M841 381.5h27l1.5 7.5h-27z M848 387.5l2-1 12-5" stroke="#bdbdbd" stroke-width="1.5" fill="none"/>
  <!-- 01 label -->
  <path d="M1815.5 711.3a14.6 7.5 -6 1 0 29.2 0a14.6 7.5 -6 1 0 -29.2 0z M1825 711.5a5.9 4.8 -10 1 0 11.8 0a5.9 4.8 -10 1 0 -11.8 0z" fill="#ec6a3c" fill-rule="evenodd"/>
  <path d="M1855.2 703.4L1863.6 703.4L1870.7 717.6L1861.5 717.6Z M1846.4 706L1855.5 703.4L1857.5 707.3L1847.5 709Z" fill="#ec6a3c"/>
  <!-- plate icons -->
  <g fill="#ececec" stroke="#b5b5b5" stroke-width="1.6">
    <path d="M1620.2 379.4L1674.3 379.4L1683.7 393.5L1630.4 394.3z"/>
    <path d="M1633.5 403L1690.8 403L1698.6 417L1642 418.6z"/>
    <path d="M1647.6 427.2L1705.7 427L1714.3 442.1L1657 443z"/>
    <path d="M1661.8 451.6L1721.4 451L1730 468L1671.2 468.8z"/>
    <path d="M1676.7 477.4L1737 477L1746.5 493.9L1686.9 495.5z"/>
    <path d="M1692.3 503.3L1752.7 503L1763.7 521.3L1702.5 522.9z"/>
  </g>
  <g fill="none" stroke="#b5b5b5" stroke-width="1.3">
    <path d="M1635 382.5l25 8M1668 382l-30 9"/>
    <path d="M1652 410l14-5 17 5-14 5z M1661 410h9"/>
    <path d="M1664 432h36l3 7h-36z M1667 436h14"/>
    <path d="M1680 455h28q6 0 7 5l1 5h-34z"/>
    <path d="M1686 482h40M1693 490h44 M1690 480h5l1 4h-5z M1718 487h6l1 4h-6z"/>
    <path d="M1707 508h36M1725 508l5 12"/>
  </g>
  <defs>
  <clipPath id="skclip"><path id="sksil" d="M930.0 297.0C930.5 292.2 930.3 276.7 933.0 268.0C935.7 259.3 940.2 251.7 946.0 245.0C951.8 238.3 956.5 234.1 968.0 228.0C979.5 221.9 999.7 214.0 1015.0 208.7C1030.3 203.4 1040.4 198.5 1060.0 196.0C1079.6 193.5 1107.9 193.9 1132.5 193.7C1157.1 193.5 1186.7 192.7 1207.5 195.0C1228.3 197.3 1242.9 202.1 1257.5 207.5C1272.1 212.9 1284.2 221.2 1295.0 227.5C1305.8 233.8 1315.3 239.2 1322.0 245.0C1328.7 250.8 1332.0 255.3 1335.0 262.0C1338.0 268.7 1338.8 272.8 1340.0 285.0C1341.2 297.2 1342.8 318.5 1342.5 335.0C1342.2 351.5 1339.6 369.8 1338.0 384.0C1336.4 398.2 1333.8 414.0 1333.0 420.0L1334.5 470L1350 478L1355.7 491.5L1347.8 526L1326.6 552.4L1289.5 568L1257.7 584L1244.5 605L1243.8 633.7L1238 654.5L1221.9 656.8L1204.6 666L1189.7 669.4L1178.2 666L1166.6 669.4L1155 664.8L1149.4 670.6L1132.1 671.7L1109 669.4L1091.8 663.7L1079.1 659L1068.8 654.5L1057.3 645.3L1049.2 640.7L1051 616L1051 596.5L1045 582.7L1025.5 573L994 557L968.6 537.6L955 518L943 489L951 479L942 459L937 430L932.4 390L929.4 360L929 320Z"/></clipPath>
  <filter id="bl1" x="-20%" y="-20%" width="140%" height="140%"><feGaussianBlur stdDeviation="1"/></filter>
  <filter id="bl2" x="-20%" y="-20%" width="140%" height="140%"><feGaussianBlur stdDeviation="2"/></filter>
  <filter id="bl4" x="-30%" y="-30%" width="160%" height="160%"><feGaussianBlur stdDeviation="4"/></filter>
  <filter id="bl7" x="-40%" y="-40%" width="180%" height="180%"><feGaussianBlur stdDeviation="7"/></filter>
  <linearGradient id="bowlg" x1="1000" y1="200" x2="1230" y2="340" gradientUnits="userSpaceOnUse">
    <stop offset="0" stop-color="#1b5276"/><stop offset="0.4" stop-color="#1e5b83"/><stop offset="0.75" stop-color="#246b9a"/><stop offset="1" stop-color="#2a79aa"/>
  </linearGradient>
</defs>
<use href="#sksil" fill="#2b83b6"/>
<g clip-path="url(#skclip)">
  <!-- left cranium -->
  <path d="M920 300L990 318L1000 440L985 480L930 470Z" fill="#2776a9" filter="url(#bl4)"/>
  <path d="M940 330L952 335L975 375L992 405L988 415L965 385L945 350Z" fill="#2e8abf" filter="url(#bl1)"/>
  <path d="M990 318L1012 325L1012 440L1000 470L992 420Z" fill="#2674a6" filter="url(#bl4)"/>
  <!-- forehead -->
  <path d="M1012 324L1290 318L1295 372L1262 400L1130 404L1012 432Z" fill="#2b84b7" filter="url(#bl4)"/>
  <ellipse cx="1150" cy="362" rx="80" ry="20" fill="#2d89bd" filter="url(#bl7)"/>
  <path d="M1100 355L1122 352L1120 378L1104 376Z" fill="#3494c8" filter="url(#bl2)"/>
  <!-- right temple / side -->
  <path d="M1255 318L1298 322L1320 440L1300 440L1282 385Z" fill="#2774a5" filter="url(#bl2)"/>
  <path d="M1292 330L1345 300L1350 480L1318 470L1302 390Z" fill="#205f8b" filter="url(#bl2)"/>
  <!-- bowl interior -->
  <path d="M953.7 267.5C953.2 260.0 957.2 251.7 962.0 245.0C966.8 238.3 968.7 233.8 982.5 227.5C996.3 221.2 1020.0 212.1 1045.0 207.5C1070.0 202.9 1103.3 200.4 1132.5 200.0C1161.7 199.6 1195.0 201.2 1220.0 205.0C1245.0 208.8 1267.5 216.7 1282.5 222.5C1297.5 228.3 1303.8 234.6 1310.0 240.0C1316.2 245.4 1317.7 248.3 1320.0 255.0C1322.3 261.7 1324.4 272.8 1323.7 280.0C1323.0 287.2 1319.1 293.0 1316.0 298.0C1312.9 303.0 1316.8 307.2 1305.0 310.0C1293.2 312.8 1267.5 315.0 1245.0 315.0C1222.5 315.0 1190.8 309.2 1170.0 310.0C1149.2 310.8 1138.8 318.3 1120.0 320.0C1101.2 321.7 1078.3 322.1 1057.5 320.0C1036.7 317.9 1010.4 312.5 995.0 307.5C979.6 302.5 971.9 296.7 965.0 290.0C958.1 283.3 954.2 275.0 953.7 267.5Z" fill="url(#bowlg)"/>
  <path d="M965 250L1010 222L1080 210L1060 250L1000 290Z" fill="#194c6e" filter="url(#bl7)" opacity="0.5"/>
  <path d="M1150 280L1230 250L1300 262L1310 300L1240 312L1170 305Z" fill="#2c7eb1" filter="url(#bl7)" opacity="0.8"/>
  
  <!-- rim highlights -->
  <path d="M937.0 300.0C937.3 293.7 934.2 273.3 939.0 262.0C943.8 250.7 953.3 240.7 966.0 232.0C978.7 223.3 999.3 215.7 1015.0 210.0C1030.7 204.3 1040.5 200.5 1060.0 198.0C1079.5 195.5 1107.5 195.2 1132.0 195.0C1156.5 194.8 1186.2 194.7 1207.0 197.0C1227.8 199.3 1242.3 203.7 1257.0 209.0C1271.7 214.3 1282.8 221.5 1295.0 229.0C1307.2 236.5 1322.5 243.8 1330.0 254.0C1337.5 264.2 1338.7 277.3 1340.0 290.0C1341.3 302.7 1338.3 323.3 1338.0 330.0L1300.0 326.0C1303.7 321.7 1317.7 307.7 1322.0 300.0C1326.3 292.3 1326.3 287.7 1326.0 280.0C1325.7 272.3 1327.2 263.8 1320.0 254.0C1312.8 244.2 1299.7 229.5 1283.0 221.0C1266.3 212.5 1245.2 206.8 1220.0 203.0C1194.8 199.2 1161.2 198.1 1132.0 198.5C1102.8 198.9 1070.2 201.1 1045.0 205.5C1019.8 209.9 996.5 214.8 981.0 225.0C965.5 235.2 954.8 255.8 952.0 267.0C949.2 278.2 957.3 285.0 964.0 292.0C970.7 299.0 983.5 304.2 992.0 309.0C1000.5 313.8 1017.0 318.8 1015.0 321.0C1013.0 323.2 990.8 323.8 980.0 322.0C969.2 320.2 955.0 312.0 950.0 310.0Z" fill="#3596cc" filter="url(#bl1)"/>
  <path d="M992 309L1060 321L1120 321L1170 311L1245 316L1305 311L1300 324L1250 320L1172 316L1120 324L1050 324L1012 323Z" fill="#3699cf" filter="url(#bl1)"/>
  <path d="M1288 318L1295 340L1300 322ZM1310 316L1317 345L1322 315Z M1030 322l6 14 4-14z M960 300l10 20 6-15z" fill="#3699cf"/>
  <!-- brow ridges (light) -->
  <path d="M1005 445L1040 418L1095 400L1140 412L1200 418L1235 400L1290 402L1320 425L1300 420L1250 410L1210 428L1140 425L1100 410L1050 425L1012 450Z" fill="#3191c6" filter="url(#bl2)"/>
  <!-- left orbit -->
  <path d="M1004 445C1010 425 1050 406 1095 405C1120 406 1132 418 1130 440C1128 470 1115 500 1085 508C1055 512 1020 500 1008 480Z" fill="#22699a" filter="url(#bl1)"/><path d="M1008 450C1012 470 1022 490 1040 500L1030 480L1020 455Z" fill="#1d5a82" filter="url(#bl2)"/>
  <path d="M1005 448C1012 428 1050 404 1095 403C1118 404 1132 416 1131 435C1110 442 1085 447 1055 455C1030 462 1018 472 1010 486Z" fill="#1d5579" filter="url(#bl2)"/>
  <path d="M1048 455L1092 450L1112 468L1080 480L1052 474Z" fill="#2e86bb" filter="url(#bl2)"/>
  <path d="M1030 486L1050 478L1095 468L1103 476L1088 490L1048 497Z" fill="#16405d" filter="url(#bl1)"/>
  <path d="M1004 470C1008 490 1030 508 1070 512C1100 512 1122 500 1132 478L1136 500C1120 520 1090 524 1050 522C1020 518 1005 505 1000 490Z" fill="#3291c6" filter="url(#bl2)"/>
  <!-- right orbit -->
  <path d="M1190 450C1195 425 1230 406 1265 406C1300 408 1320 420 1322 440C1322 470 1310 500 1290 505C1250 508 1215 505 1196 488Z" fill="#2a78a9" filter="url(#bl1)"/>
  <path d="M1189 455C1195 430 1228 405 1265 405C1298 407 1318 420 1321 438C1295 444 1265 452 1240 464C1220 476 1208 490 1200 502Z" fill="#1d577c" filter="url(#bl2)"/>
  <path d="M1228 460L1275 452L1300 470L1285 482L1240 478Z" fill="#349bd2" filter="url(#bl2)"/>
  <path d="M1228 483L1262 486L1279 487L1274 496L1248 493Z" fill="#17435f" filter="url(#bl1)"/>
  <path d="M1200 495C1220 506 1260 508 1300 503C1315 495 1322 480 1325 465L1332 480C1325 505 1310 518 1270 520C1240 520 1210 515 1198 508Z" fill="#3494ca" filter="url(#bl2)"/>
  <!-- nose bridge -->
  <path d="M1132 425L1192 440L1196 495L1180 492L1158 492L1135 505Z" fill="#3090c5" filter="url(#bl2)"/>
  <!-- left cheek -->
  <path d="M950 500L1010 520L1060 530L1080 560L1050 592L1000 565L965 540Z" fill="#2a7eb1" filter="url(#bl4)"/><path d="M945 482L975 478L1000 495L990 515L955 512Z" fill="#3390c5" filter="url(#bl2)"/>
  <path d="M975 545L1010 560L1048 585L1050 600L1030 585L995 568Z" fill="#2572a3" filter="url(#bl2)"/>
  <path d="M1021 522L1045 516L1072 513L1068 518L1040 524Z" fill="#1d587d" filter="url(#bl1)"/>
  <path d="M1048 556C1058 548 1064 535 1072 528C1078 526 1082 530 1080 534C1072 540 1062 552 1052 560Z" fill="#1f5e86" filter="url(#bl1)"/>
  <path d="M1070 540L1125 535L1130 600L1095 610L1065 580Z" fill="#2f8bc0" filter="url(#bl4)"/>
  <!-- right cheek / maxilla -->
  <path d="M1205 505L1222 512L1242 598L1232 610L1212 590Z" fill="#2570a0" filter="url(#bl4)"/>
  <path d="M1232 524L1262 524L1258 552L1240 556Z" fill="#256d9c" filter="url(#bl2)"/>
  <path d="M1248 516L1302 517L1300 522L1250 522Z" fill="#1d587d" filter="url(#bl1)"/>
  <path d="M1245 525L1330 515L1352 495L1350 545L1300 570L1250 600Z" fill="#2672a3" filter="url(#bl4)"/>
  <path d="M1330 480L1357 490L1350 530L1320 555L1340 500Z" fill="#2673a4" filter="url(#bl2)"/>
  <!-- nose -->
  <path d="M1129 538L1134.8 512.3L1157.5 495.2L1180.3 495.2L1197.4 512.3L1203 546.4L1194.5 575L1163.2 586L1134.8 577.7L1120.6 560.6Z" fill="#2874a5" filter="url(#bl1)"/>
  <path d="M1131 532C1133 512 1148 496 1166 494C1184 494 1198 506 1199 524L1192 530L1178 524L1160 527L1142 536Z" fill="#163f5b" filter="url(#bl1)"/>
  <path d="M1124 540L1128 575L1148 586L1187 583L1210 567L1203 540L1190 528L1160 524L1138 532Z" fill="#2a78a9" filter="url(#bl1)"/>
  <path d="M1140 548L1160 538L1180 542L1192 555L1178 572L1150 575L1138 562Z" fill="#3190c5" filter="url(#bl2)"/>
  <path d="M1125 543L1126 574M1145 553l16-7M1160 568l26-13M1138 562l12-4M1176 540l14 6M1150 578l18-4M1185 528l10 14" stroke="#1a4d6e" stroke-width="2" fill="none" filter="url(#bl1)"/>
  <path d="M1102 572L1099 602" stroke="#1f5e86" stroke-width="2.5" filter="url(#bl1)"/>
  <!-- lower maxilla -->
  <path d="M1060 590L1130 588L1200 582L1215 622L1140 630L1060 620Z" fill="#2f8cc1" filter="url(#bl4)"/>
  <path d="M1092 600L1110 595L1115 625L1095 628Z" fill="#3596cc" filter="url(#bl2)"/>
  <!-- teeth -->
  <path d="M1051.5 616.5L1091.8 629.1L1143.6 629.1L1189.7 630.3L1224.2 626.8L1241.5 624.5L1250 680L1040 680Z" fill="#3192c8" filter="url(#bl1)"/>
  <path d="M1051.5 616.5L1091.8 629.1L1143.6 629.1L1189.7 630.3L1224.2 626.8L1241.5 624.5" stroke="#1c567b" stroke-width="1.8" fill="none" filter="url(#bl1)"/>
  <g stroke="#276fa0" stroke-width="2" filter="url(#bl1)">
    <path d="M1060 622l2 22M1072 626l1 30M1084 628l0 32M1098 630l1 34M1112 631l-1 36M1126 631l0 38M1140 631l0 38M1156 631l0 34M1170 632l0 36M1184 632l-1 35M1198 630l-1 35M1212 628l-1 30M1228 626l0 30"/>
  </g>
  <path d="M1110 640l10 10-2 12M1150 650l10-8 5 18" stroke="#1f5e86" stroke-width="2.5" fill="none" filter="url(#bl1)"/>
</g>
<!-- jagrim -->
<g clip-path="url(#skclip)" fill="none"><path d="M956 280.7L960 286.2L963 289.3L966 294.5L970 298.6L975 298.2L980 300.4L985 306.9L990 306.4L995 308.7L1000 313.4L1005 311.6L1010 314.3L1015 313.4L1020 315.1L1025 313.6L1030 316.9L1035 319.0L1040 318.1L1045 319.6L1051 319.6L1056 316.9L1062 320.8L1067 320.3L1072 319.3L1078 318.3L1083 322.8L1088 320.6L1094 321.5L1099 322.0L1104 320.9L1109 321.7L1115 318.8L1120 320.5L1125 317.9L1130 319.6L1136 318.5L1141 313.8L1146 313.2L1151 312.8L1156 315.7L1162 312.3L1167 312.4L1172 310.0L1177 311.3L1182 311.0L1187 311.2L1192 312.7L1197 313.0L1202 314.9L1208 314.1L1213 315.6L1218 315.6L1223 316.5L1228 315.2L1233 313.0L1238 316.8L1243 316.9L1248 316.1L1253 314.0L1258 314.2L1263 311.2L1268 313.9L1274 312.1L1279 310.2L1284 308.7L1289 312.2L1294 312.4L1299 307.4L1304 310.5L1309 304.2L1313 300.3L1318 296.0L1320 290.7L1322 285.3L1324 280.0L1324 274.5L1323 269.0L1322 263.5L1322 258.0L1319 253.5L1316 249.0L1313 244.5L1310 240.0" stroke="#3a9dd3" stroke-width="2.2"/><path d="M939 298L941 293L941 290L943 284L942 281L944 277L948 270L948 265L951 260L953 255L957 250L958 246L961 241L969 238L971 233L975 232L978 228L986 224L991 223L996 220L1001 220L1003 215L1011 216L1014 213L1020 211L1024 210L1029 210L1034 208L1041 206L1045 207L1049 204L1056 203" stroke="#3a9dd3" stroke-width="2"/></g>
<!-- facets -->
<g clip-path="url(#skclip)"><path d="M923 187L935 199L927 199ZM927 199L935 199L934 219ZM920 241L937 246L934 254ZM920 241L934 254L921 251ZM941 285L936 293L926 298ZM926 306L943 317L930 315ZM943 317L935 330L929 331ZM923 362L939 357L933 371ZM923 362L933 371L922 373ZM922 373L937 386L926 384ZM943 400L938 412L921 408ZM921 408L938 412L927 423ZM938 412L940 420L927 423ZM925 448L942 453L928 465ZM942 453L937 462L928 465ZM928 465L937 462L922 477ZM922 477L934 477L934 485ZM927 500L935 499L930 511ZM924 531L934 540L922 541ZM922 541L934 540L920 556ZM939 563L936 578L929 578ZM929 578L936 578L937 589ZM929 578L937 589L927 594ZM928 623L934 628L925 634ZM921 647L936 643L941 655ZM921 647L941 655L926 663ZM926 663L933 676L928 669ZM933 190L951 185L935 199ZM951 185L951 208L935 199ZM935 199L955 218L934 219ZM934 219L955 218L949 228ZM934 226L949 228L948 245ZM934 226L948 245L937 246ZM938 272L949 265L941 285ZM949 265L954 286L941 285ZM954 309L948 320L943 317ZM935 330L950 328L946 344ZM935 330L946 344L935 346ZM946 344L949 361L939 357ZM939 357L949 361L933 371ZM937 386L956 397L943 400ZM938 412L948 408L940 420ZM948 421L952 441L942 440ZM942 453L954 450L937 462ZM954 450L953 466L937 462ZM934 477L947 478L955 492ZM935 499L954 502L936 511ZM933 525L949 531L934 540ZM939 563L947 577L936 578ZM936 578L947 577L955 596ZM955 596L947 609L941 611ZM941 611L947 609L956 621ZM941 611L956 621L938 619ZM938 619L950 632L934 628ZM934 628L950 632L936 643ZM933 676L951 675L950 688ZM951 185L967 187L951 208ZM949 228L960 246L948 245ZM960 246L963 255L951 258ZM949 265L965 272L963 285ZM954 309L964 302L963 317ZM948 320L963 317L950 328ZM950 328L959 336L961 346ZM956 371L962 372L955 390ZM962 372L965 388L955 390ZM955 390L965 388L956 397ZM956 397L960 399L948 408ZM960 399L961 409L948 408ZM967 424L965 440L952 441ZM952 441L965 440L968 449ZM952 441L968 449L954 450ZM948 518L966 519L968 526ZM949 531L968 526L956 540ZM968 526L965 545L956 540ZM947 609L967 610L961 621ZM947 609L961 621L956 621ZM968 650L961 663L956 659ZM956 659L961 663L951 675ZM951 675L969 687L950 688ZM962 201L977 201L974 214ZM962 228L979 224L978 241ZM965 272L978 268L973 286ZM980 299L973 305L964 302ZM963 317L972 323L959 336ZM959 336L976 350L961 346ZM966 360L973 376L962 372ZM960 399L973 394L979 410ZM960 399L979 410L961 409ZM961 409L979 410L973 428ZM967 424L973 428L965 440ZM973 428L978 440L965 440ZM968 449L973 454L965 463ZM964 489L975 498L964 506ZM975 498L977 512L966 519ZM966 519L973 525L968 526ZM960 577L977 577L975 588ZM966 628L981 641L968 650ZM968 650L981 641L961 663ZM963 671L977 674L969 687ZM977 674L976 684L969 687ZM974 189L992 195L977 201ZM977 201L988 206L974 214ZM988 206L992 217L974 214ZM979 224L986 238L978 241ZM978 241L986 238L986 257ZM972 253L988 265L978 268ZM973 305L988 304L972 323ZM988 304L988 320L972 323ZM972 323L988 320L987 332ZM972 323L987 332L975 329ZM973 376L988 384L978 387ZM973 394L985 397L979 410ZM985 397L990 411L979 410ZM987 424L985 435L978 440ZM973 454L986 449L985 458ZM973 467L985 458L988 473ZM978 493L991 489L975 498ZM991 489L993 504L975 498ZM977 512L992 519L973 525ZM992 519L989 526L973 525ZM989 526L995 537L973 538ZM973 538L992 555L975 552ZM977 577L994 581L992 596ZM975 588L992 596L975 601ZM974 632L993 635L981 641ZM980 657L992 660L977 674ZM992 660L987 666L977 674ZM989 227L1003 224L986 238ZM986 238L1006 244L1003 255ZM986 238L1003 255L986 257ZM1003 255L1005 264L988 265ZM1005 279L999 292L994 296ZM994 296L999 292L1005 304ZM987 332L1003 348L988 351ZM988 351L1003 348L1006 360ZM1004 368L999 383L988 384ZM1005 439L1005 448L986 449ZM985 458L1003 472L988 473ZM991 489L1007 486L1008 506ZM992 519L998 515L1006 533ZM995 537L1002 539L992 555ZM992 555L1000 558L1000 568ZM985 570L1000 568L994 581ZM994 581L1008 589L992 596ZM992 596L1008 589L1006 606ZM992 596L1006 606L986 606ZM986 606L1006 606L1007 621ZM990 622L1000 636L993 635ZM993 635L1000 636L1003 640ZM992 660L998 658L1003 669ZM992 660L1003 669L987 666ZM1003 669L999 682L986 683ZM1003 255L1021 269L1005 264ZM1005 264L1021 269L1015 280ZM1005 279L1015 280L999 292ZM1014 289L1012 310L1005 304ZM1005 325L1013 331L1003 332ZM1003 348L1016 343L1015 364ZM1006 360L1020 375L1004 368ZM1005 396L1020 398L1018 406ZM1016 474L1014 491L1007 486ZM1007 486L1014 491L1008 506ZM1006 533L1017 527L1002 539ZM1015 589L1013 602L1006 606ZM1003 640L1018 657L998 658ZM1014 193L1025 188L1011 206ZM1020 240L1027 239L1028 254ZM1015 254L1028 254L1034 271ZM1015 254L1034 271L1021 269ZM1021 269L1033 276L1015 280ZM1015 280L1024 296L1014 289ZM1014 289L1024 296L1012 310ZM1024 296L1033 307L1012 310ZM1033 307L1030 315L1014 324ZM1020 398L1030 414L1018 406ZM1026 454L1030 461L1020 459ZM1014 491L1030 491L1021 500ZM1021 500L1025 498L1029 516ZM1028 525L1030 536L1013 538ZM1016 564L1034 568L1033 580ZM1033 580L1026 590L1015 589ZM1013 630L1029 634L1017 649ZM1018 657L1031 662L1026 666ZM1025 188L1044 187L1045 205ZM1029 217L1047 227L1033 226ZM1034 271L1040 273L1042 278ZM1034 271L1042 278L1033 276ZM1038 319L1039 338L1028 337ZM1044 390L1046 396L1033 400ZM1033 400L1046 396L1039 415ZM1029 425L1044 419L1024 440ZM1044 436L1041 448L1026 454ZM1030 461L1039 458L1040 475ZM1029 516L1045 527L1028 525ZM1030 536L1037 541L1041 558ZM1030 536L1041 558L1027 554ZM1034 568L1039 566L1046 575ZM1034 608L1045 601L1037 615ZM1034 608L1037 615L1027 614ZM1027 614L1037 615L1046 630ZM1028 643L1044 649L1031 662ZM1044 649L1040 656L1031 662ZM1031 662L1040 656L1026 666ZM1040 656L1047 672L1026 666ZM1044 187L1053 188L1050 206ZM1047 227L1052 242L1045 239ZM1052 242L1060 260L1039 258ZM1039 258L1060 260L1054 266ZM1039 258L1054 266L1040 273ZM1038 319L1058 323L1056 331ZM1039 338L1053 345L1038 342ZM1044 419L1059 429L1053 433ZM1047 485L1056 491L1047 499ZM1056 491L1057 505L1047 499ZM1041 518L1057 511L1058 526ZM1047 672L1058 675L1050 682ZM1053 188L1064 187L1073 204ZM1053 188L1073 204L1050 206ZM1050 206L1073 204L1059 217ZM1059 217L1072 215L1059 224ZM1072 215L1072 228L1059 224ZM1059 224L1072 228L1066 245ZM1054 281L1065 280L1059 291ZM1059 291L1066 308L1058 309ZM1070 317L1063 331L1056 331ZM1058 355L1066 356L1071 372ZM1058 355L1071 372L1052 375ZM1052 375L1071 372L1052 381ZM1071 372L1064 381L1052 381ZM1050 399L1067 399L1069 407ZM1050 399L1069 407L1053 416ZM1053 416L1069 407L1059 429ZM1057 462L1067 475L1052 475ZM1072 494L1067 499L1057 505ZM1057 505L1067 499L1070 512ZM1057 505L1070 512L1057 511ZM1058 526L1063 532L1056 540ZM1067 544L1067 558L1057 551ZM1058 634L1064 630L1060 641ZM1064 630L1068 649L1060 641ZM1055 661L1064 658L1071 676ZM1064 187L1085 195L1081 199ZM1070 343L1076 347L1084 354ZM1084 368L1082 386L1064 381ZM1067 399L1082 396L1069 407ZM1080 436L1076 451L1066 455ZM1066 455L1081 460L1066 464ZM1081 460L1084 479L1067 475ZM1070 512L1077 514L1077 527ZM1077 527L1081 536L1067 544ZM1083 635L1078 650L1068 649ZM1068 649L1081 663L1064 658ZM1064 658L1085 668L1071 676ZM1090 189L1097 200L1081 199ZM1085 215L1098 214L1097 225ZM1085 230L1097 225L1094 246ZM1084 239L1094 246L1084 252ZM1084 252L1094 266L1080 271ZM1081 306L1096 311L1077 317ZM1096 311L1091 323L1077 317ZM1077 317L1090 333L1083 337ZM1083 337L1090 333L1095 345ZM1095 345L1098 360L1084 354ZM1082 386L1095 397L1082 396ZM1076 451L1093 447L1081 460ZM1084 479L1095 494L1081 486ZM1077 514L1092 510L1077 527ZM1081 536L1095 540L1094 558ZM1081 536L1094 558L1082 550ZM1081 592L1090 605L1086 602ZM1083 635L1095 629L1078 650ZM1085 668L1091 667L1090 685ZM1085 668L1090 685L1084 688ZM1090 189L1111 193L1097 200ZM1091 298L1106 291L1103 310ZM1096 311L1103 310L1102 321ZM1096 311L1102 321L1091 323ZM1102 321L1111 329L1090 333ZM1111 329L1104 347L1095 345ZM1105 383L1102 402L1095 397ZM1095 397L1102 402L1097 409ZM1099 425L1109 437L1093 440ZM1096 458L1104 459L1097 474ZM1104 459L1104 471L1097 474ZM1097 474L1104 471L1105 491ZM1095 494L1105 491L1109 505ZM1095 540L1105 555L1094 558ZM1090 564L1112 564L1111 575ZM1111 575L1105 590L1089 592ZM1095 629L1104 649L1095 645ZM1109 676L1107 687L1090 685ZM1111 193L1122 194L1119 205ZM1111 193L1119 205L1106 201ZM1102 217L1121 214L1117 230ZM1111 257L1116 250L1116 272ZM1111 257L1116 272L1104 272ZM1116 272L1118 277L1102 281ZM1102 281L1115 289L1106 291ZM1115 289L1122 308L1103 310ZM1103 310L1122 308L1122 322ZM1116 334L1119 349L1104 347ZM1105 383L1124 389L1116 395ZM1105 383L1116 395L1102 402ZM1102 402L1116 395L1110 413ZM1110 413L1116 406L1123 427ZM1109 450L1121 448L1116 459ZM1109 450L1116 459L1104 459ZM1118 488L1115 500L1109 505ZM1109 505L1115 500L1118 517ZM1109 505L1118 517L1109 513ZM1108 527L1119 526L1125 541ZM1110 541L1125 541L1105 555ZM1124 555L1115 566L1112 564ZM1119 583L1118 595L1105 590ZM1120 603L1124 615L1109 617ZM1124 615L1123 629L1111 630ZM1111 630L1123 629L1115 642ZM1104 649L1115 642L1108 660ZM1115 642L1123 663L1108 660ZM1122 194L1131 206L1119 205ZM1121 214L1131 226L1117 230ZM1117 230L1131 226L1116 246ZM1116 250L1129 256L1116 272ZM1116 272L1135 284L1118 277ZM1137 316L1137 328L1116 334ZM1137 328L1130 344L1119 349ZM1116 376L1132 376L1130 385ZM1130 385L1133 401L1116 395ZM1116 395L1136 412L1116 406ZM1116 459L1136 477L1123 473ZM1123 473L1136 477L1118 488ZM1115 500L1137 499L1130 513ZM1130 513L1135 531L1119 526ZM1125 541L1130 538L1124 555ZM1130 538L1130 552L1124 555ZM1123 629L1138 635L1135 644ZM1115 671L1132 679L1120 687ZM1147 216L1142 230L1131 226ZM1129 271L1147 270L1145 278ZM1137 328L1147 333L1130 344ZM1132 376L1147 383L1130 385ZM1130 385L1147 383L1133 401ZM1131 422L1143 439L1130 440ZM1143 439L1149 449L1135 452ZM1136 477L1143 492L1129 489ZM1129 489L1150 502L1137 499ZM1138 595L1145 596L1129 611ZM1145 596L1142 611L1129 611ZM1141 644L1145 660L1130 659ZM1129 668L1145 669L1143 686ZM1147 216L1158 213L1142 230ZM1142 230L1162 243L1145 244ZM1156 273L1158 282L1145 278ZM1145 278L1158 282L1162 297ZM1149 309L1159 305L1159 316ZM1150 322L1162 332L1147 333ZM1144 347L1158 357L1142 358ZM1147 383L1154 387L1157 395ZM1147 383L1157 395L1145 398ZM1148 428L1158 425L1161 436ZM1143 439L1161 436L1163 454ZM1149 449L1163 454L1155 466ZM1155 466L1163 479L1141 476ZM1142 516L1154 520L1161 526ZM1146 530L1161 526L1146 542ZM1157 564L1163 583L1143 582ZM1142 611L1160 609L1145 615ZM1145 615L1161 623L1144 631ZM1161 623L1162 635L1144 631ZM1144 631L1162 635L1156 647ZM1144 631L1156 647L1141 644ZM1169 186L1172 199L1156 206ZM1155 232L1172 229L1172 246ZM1172 269L1174 284L1158 282ZM1162 297L1171 293L1159 305ZM1170 364L1172 372L1158 369ZM1157 395L1174 399L1157 411ZM1161 436L1172 440L1169 449ZM1161 436L1169 449L1163 454ZM1163 479L1175 488L1155 492ZM1155 492L1175 488L1160 497ZM1154 520L1174 531L1161 526ZM1161 526L1170 539L1155 537ZM1156 557L1173 570L1157 564ZM1163 583L1167 582L1156 597ZM1167 616L1176 633L1162 635ZM1169 186L1187 203L1172 199ZM1172 199L1188 212L1172 212ZM1172 246L1187 254L1167 258ZM1172 269L1188 271L1174 284ZM1177 303L1186 324L1173 321ZM1167 334L1181 334L1180 342ZM1174 350L1180 342L1170 364ZM1180 342L1188 360L1170 364ZM1170 364L1189 371L1172 372ZM1172 372L1189 371L1176 380ZM1182 445L1180 465L1171 464ZM1171 464L1180 465L1181 481ZM1175 488L1181 497L1172 500ZM1174 531L1187 525L1170 539ZM1170 555L1187 563L1173 570ZM1167 582L1186 582L1185 597ZM1167 582L1185 597L1176 593ZM1167 616L1187 614L1180 634ZM1174 648L1183 660L1176 659ZM1197 191L1197 205L1187 203ZM1182 224L1197 230L1199 241ZM1187 254L1197 258L1188 271ZM1183 293L1194 299L1183 306ZM1183 306L1200 310L1196 321ZM1180 342L1197 363L1188 360ZM1190 411L1197 425L1184 420ZM1184 420L1197 425L1201 441ZM1201 441L1193 453L1182 445ZM1182 445L1193 453L1180 465ZM1201 467L1199 474L1181 481ZM1181 481L1199 474L1202 492ZM1181 493L1202 492L1181 497ZM1187 525L1199 531L1195 544ZM1181 544L1195 544L1187 558ZM1195 544L1202 551L1187 558ZM1199 569L1198 577L1186 582ZM1196 596L1201 606L1183 611ZM1180 634L1201 629L1188 641ZM1199 649L1202 658L1183 660ZM1182 675L1198 672L1195 681ZM1197 191L1210 204L1197 205ZM1197 205L1210 204L1194 219ZM1210 204L1210 216L1194 219ZM1194 219L1207 224L1197 230ZM1202 271L1212 279L1199 279ZM1199 279L1212 279L1194 299ZM1212 279L1211 289L1194 299ZM1211 289L1206 312L1200 310ZM1215 320L1212 331L1203 336ZM1203 336L1212 331L1214 345ZM1197 374L1214 377L1199 389ZM1197 425L1212 428L1201 441ZM1199 474L1207 481L1202 492ZM1202 492L1212 507L1200 506ZM1196 511L1210 525L1199 531ZM1202 551L1208 549L1199 569ZM1198 577L1215 584L1196 596ZM1201 606L1214 608L1212 624ZM1207 628L1214 649L1199 649ZM1208 192L1222 186L1210 204ZM1210 204L1224 200L1210 216ZM1210 216L1221 212L1207 224ZM1207 224L1226 239L1216 241ZM1219 259L1221 272L1214 265ZM1220 293L1220 311L1206 312ZM1214 345L1225 355L1215 362ZM1215 362L1225 355L1221 368ZM1221 368L1226 386L1209 380ZM1208 395L1222 410L1207 407ZM1211 441L1227 435L1221 450ZM1215 446L1222 467L1212 462ZM1209 490L1226 499L1212 507ZM1212 507L1224 513L1213 514ZM1210 525L1222 525L1216 546ZM1216 546L1223 546L1229 558ZM1208 549L1229 558L1220 565ZM1208 549L1220 565L1209 566ZM1209 566L1220 565L1215 584ZM1220 565L1228 576L1215 584ZM1215 584L1228 576L1226 591ZM1215 584L1226 591L1214 588ZM1226 591L1229 601L1214 608ZM1227 617L1220 627L1207 628ZM1207 628L1227 645L1214 649ZM1214 649L1221 657L1213 656ZM1222 186L1234 193L1224 200ZM1234 193L1239 200L1224 200ZM1226 224L1235 239L1226 239ZM1228 285L1234 277L1239 293ZM1239 293L1239 303L1220 311ZM1220 311L1239 303L1240 318ZM1220 402L1236 412L1222 410ZM1227 435L1236 437L1221 450ZM1221 450L1233 452L1222 467ZM1240 467L1235 478L1220 481ZM1220 493L1236 492L1226 499ZM1226 499L1233 506L1242 515ZM1222 525L1237 528L1223 546ZM1237 528L1237 536L1223 546ZM1229 601L1239 603L1227 617ZM1227 645L1241 660L1221 657ZM1238 257L1253 259L1240 269ZM1253 259L1249 267L1240 269ZM1240 269L1253 281L1234 277ZM1234 277L1249 298L1239 293ZM1239 293L1249 298L1253 305ZM1239 303L1253 305L1247 318ZM1253 350L1253 362L1241 359ZM1241 370L1246 372L1255 389ZM1255 389L1247 397L1236 395ZM1236 395L1251 410L1236 412ZM1251 410L1250 420L1232 424ZM1232 424L1250 420L1236 437ZM1233 452L1245 446L1255 466ZM1236 492L1253 493L1233 506ZM1233 506L1254 497L1242 515ZM1237 536L1250 545L1242 551ZM1234 563L1250 566L1235 583ZM1239 641L1250 641L1246 654ZM1246 230L1260 231L1263 242ZM1263 242L1264 255L1253 259ZM1249 267L1261 265L1253 281ZM1261 265L1260 281L1253 281ZM1267 317L1264 333L1249 338ZM1249 338L1261 351L1253 350ZM1253 350L1261 351L1261 362ZM1253 362L1261 362L1246 372ZM1251 410L1262 413L1259 421ZM1262 465L1264 479L1254 477ZM1254 477L1266 489L1253 493ZM1253 493L1266 489L1265 504ZM1253 493L1265 504L1254 497ZM1267 537L1267 549L1251 552ZM1266 568L1263 585L1255 578ZM1246 607L1266 610L1255 619ZM1248 632L1263 632L1265 643ZM1246 654L1262 669L1248 670ZM1264 218L1272 217L1260 231ZM1262 295L1277 307L1258 306ZM1260 368L1275 373L1267 384ZM1267 384L1278 398L1259 397ZM1259 397L1272 410L1262 413ZM1259 421L1275 425L1277 441ZM1268 439L1277 441L1260 448ZM1266 489L1273 500L1265 504ZM1266 530L1276 524L1280 543ZM1267 549L1279 559L1266 568ZM1263 585L1273 578L1276 593ZM1266 610L1277 620L1264 618ZM1264 618L1275 637L1263 632ZM1263 632L1275 637L1265 643ZM1262 659L1275 661L1262 669ZM1274 673L1271 682L1266 687ZM1273 201L1291 200L1272 217ZM1289 217L1287 230L1277 225ZM1277 225L1287 230L1280 240ZM1280 240L1290 254L1279 258ZM1278 358L1291 358L1275 373ZM1286 370L1285 389L1275 389ZM1278 398L1290 396L1288 410ZM1275 425L1285 428L1290 442ZM1288 451L1286 458L1275 464ZM1275 464L1286 458L1293 480ZM1281 474L1287 493L1276 492ZM1276 492L1287 493L1292 500ZM1273 500L1292 500L1290 520ZM1281 518L1290 520L1276 524ZM1290 520L1289 532L1276 524ZM1279 559L1291 551L1280 566ZM1280 566L1287 571L1273 578ZM1273 603L1288 603L1294 617ZM1290 628L1289 644L1277 640ZM1299 231L1298 240L1289 247ZM1290 254L1305 251L1301 271ZM1289 310L1301 312L1290 323ZM1303 395L1306 407L1288 410ZM1290 442L1301 452L1288 451ZM1293 480L1301 472L1299 493ZM1292 500L1300 504L1290 520ZM1298 516L1301 528L1289 532ZM1289 532L1300 537L1286 540ZM1300 579L1306 596L1286 590ZM1286 590L1306 596L1306 610ZM1289 644L1304 644L1301 660ZM1304 214L1310 224L1299 231ZM1299 231L1310 224L1312 239ZM1299 231L1312 239L1298 240ZM1305 251L1310 266L1301 271ZM1301 296L1318 295L1301 312ZM1318 295L1317 305L1301 312ZM1302 342L1318 349L1304 357ZM1304 357L1319 373L1306 373ZM1306 373L1319 373L1310 382ZM1301 382L1310 382L1303 395ZM1306 407L1317 420L1302 424ZM1302 424L1317 420L1317 436ZM1302 424L1317 436L1300 440ZM1319 491L1317 505L1300 504ZM1301 528L1311 530L1314 541ZM1300 537L1314 541L1319 550ZM1300 551L1319 550L1298 569ZM1306 596L1313 593L1320 607ZM1313 654L1317 673L1304 668ZM1317 673L1312 681L1305 683ZM1317 218L1326 220L1324 230ZM1326 245L1328 258L1313 254ZM1313 254L1325 270L1310 266ZM1325 270L1329 281L1316 278ZM1314 322L1324 331L1313 328ZM1318 349L1327 355L1313 354ZM1319 373L1326 372L1310 382ZM1311 401L1324 393L1333 414ZM1312 415L1333 414L1317 420ZM1317 420L1324 426L1317 436ZM1324 426L1333 438L1317 436ZM1316 515L1330 513L1325 524ZM1325 524L1323 544L1314 541ZM1319 550L1331 552L1325 568ZM1318 562L1331 584L1317 583ZM1313 593L1325 596L1331 608ZM1313 593L1331 608L1320 607ZM1331 608L1326 616L1315 616ZM1315 616L1326 616L1311 631ZM1326 220L1341 216L1324 230ZM1338 227L1342 238L1326 245ZM1328 258L1343 252L1340 273ZM1325 270L1340 273L1329 281ZM1324 305L1343 302L1344 324ZM1324 331L1344 332L1339 348ZM1325 348L1339 348L1327 355ZM1327 355L1341 358L1339 371ZM1327 355L1339 371L1326 372ZM1339 371L1343 388L1327 382ZM1343 388L1345 395L1324 393ZM1333 414L1339 410L1342 422ZM1333 414L1342 422L1324 426ZM1345 481L1346 490L1332 490ZM1329 506L1344 498L1343 516ZM1339 529L1346 541L1323 544ZM1346 541L1342 552L1331 552ZM1325 596L1343 592L1331 608ZM1327 646L1342 644L1327 661ZM1327 661L1337 655L1345 671ZM1354 201L1354 217L1341 216ZM1351 230L1350 242L1342 238ZM1340 273L1353 285L1337 276ZM1340 291L1355 296L1357 303ZM1340 291L1357 303L1343 302ZM1344 324L1359 322L1344 332ZM1359 322L1350 336L1344 332ZM1353 343L1359 360L1341 358ZM1339 371L1357 368L1343 388ZM1343 388L1357 381L1345 395ZM1345 395L1351 397L1339 410ZM1342 422L1351 422L1356 436ZM1339 450L1358 451L1358 464ZM1346 467L1358 480L1345 481ZM1351 491L1352 505L1344 498ZM1356 545L1356 549L1342 552ZM1342 552L1356 549L1339 571ZM1355 563L1354 583L1336 577ZM1336 577L1350 597L1343 592ZM1342 644L1350 640L1337 655ZM1345 671L1351 672L1352 686ZM1371 203L1369 219L1354 217ZM1354 217L1369 219L1351 230ZM1369 219L1371 224L1351 230ZM1357 303L1370 319L1359 322ZM1368 367L1364 384L1357 381ZM1357 381L1364 384L1351 397ZM1351 422L1362 425L1356 436ZM1362 425L1365 432L1356 436ZM1362 459L1369 474L1358 480ZM1351 491L1365 489L1365 503ZM1350 527L1372 523L1368 544ZM1356 549L1371 557L1355 563ZM1366 578L1370 597L1350 597ZM1350 597L1370 597L1356 604ZM1356 604L1371 608L1351 618ZM1350 640L1368 657L1350 661ZM1351 672L1363 669L1365 689Z" fill="#ffffff" opacity="0.022"/><path d="M923 187L933 190L935 199ZM927 199L934 219L925 215ZM921 229L934 226L937 246ZM921 251L934 254L938 272ZM921 251L938 272L924 271ZM924 271L941 285L921 278ZM926 298L937 311L926 306ZM921 342L939 357L923 362ZM940 420L942 440L923 438ZM925 493L934 485L935 499ZM930 511L936 511L924 531ZM936 511L933 525L924 531ZM920 556L933 558L939 563ZM920 556L939 563L928 568ZM927 594L937 589L941 611ZM927 594L941 611L926 606ZM941 611L938 619L928 623ZM926 663L941 655L933 676ZM928 669L933 676L938 680ZM935 199L951 208L955 218ZM934 219L949 228L934 226ZM937 246L948 245L934 254ZM948 245L951 258L934 254ZM949 361L956 371L933 371ZM933 371L955 390L937 386ZM943 400L956 397L948 408ZM943 400L948 408L938 412ZM940 420L948 421L942 440ZM952 441L954 450L942 453ZM934 477L955 492L934 485ZM954 502L948 518L936 511ZM933 558L953 564L939 563ZM938 619L956 621L950 632ZM941 655L956 659L951 675ZM967 187L962 201L951 208ZM955 218L961 217L949 228ZM963 255L965 272L949 265ZM954 286L963 285L964 294ZM954 286L964 294L955 297ZM955 297L964 294L964 302ZM954 309L963 317L948 320ZM946 344L961 346L949 361ZM961 346L966 360L949 361ZM968 449L965 463L953 466ZM953 466L965 463L964 478ZM964 489L964 506L954 502ZM964 506L966 519L948 518ZM956 540L965 545L950 558ZM965 545L967 550L950 558ZM953 564L960 566L960 577ZM974 189L977 201L962 201ZM962 201L974 214L961 217ZM960 246L972 253L963 255ZM965 272L973 286L963 285ZM972 323L975 329L959 336ZM961 346L976 350L980 357ZM973 376L978 387L965 388ZM961 409L973 428L967 424ZM965 440L978 440L973 454ZM965 440L973 454L968 449ZM964 478L977 474L964 489ZM964 489L978 493L975 498ZM964 506L975 498L966 519ZM968 526L973 525L973 538ZM960 595L975 588L967 610ZM975 588L975 601L967 610ZM961 663L977 674L963 671ZM974 214L992 217L989 227ZM978 268L988 265L986 284ZM973 286L986 284L994 296ZM973 286L994 296L980 299ZM980 299L994 296L973 305ZM994 296L988 304L973 305ZM976 350L988 351L995 359ZM995 359L987 377L973 376ZM973 376L987 377L988 384ZM979 410L987 424L973 428ZM975 552L992 555L980 565ZM992 555L985 570L980 565ZM992 596L986 606L975 601ZM993 635L991 649L981 641ZM981 641L992 660L980 657ZM988 206L1004 218L992 217ZM992 217L1004 218L1003 224ZM986 284L1005 279L994 296ZM988 304L1005 325L988 320ZM988 351L1006 360L995 359ZM995 359L1006 360L987 377ZM1006 360L1004 368L987 377ZM988 384L999 383L985 397ZM999 383L1005 396L985 397ZM990 411L1004 406L999 422ZM990 411L999 422L987 424ZM986 449L1005 448L985 458ZM985 458L1003 463L1003 472ZM991 489L1008 506L993 504ZM993 504L998 515L992 519ZM989 526L1002 539L995 537ZM1002 539L1000 558L992 555ZM1000 568L999 580L994 581ZM991 649L1003 640L992 660ZM1003 640L998 658L992 660ZM999 193L1014 193L1004 204ZM1004 218L1019 212L1020 231ZM1003 224L1020 240L1006 244ZM1006 244L1020 240L1003 255ZM999 292L1014 289L1005 304ZM1005 304L1012 310L1005 325ZM1012 310L1014 324L1005 325ZM1003 332L1016 343L1003 348ZM1006 360L1015 364L1020 375ZM1004 368L1020 375L1017 389ZM999 422L1019 438L1005 439ZM1005 448L1014 445L1003 463ZM1014 445L1020 459L1003 463ZM1003 463L1020 459L1003 472ZM1020 459L1016 474L1003 472ZM1003 472L1016 474L1007 486ZM1008 506L1021 500L998 515ZM1000 568L1020 585L999 580ZM999 580L1015 589L1008 589ZM1006 606L1014 615L1007 621ZM1007 621L1013 630L1000 636ZM1034 199L1029 217L1019 212ZM1019 212L1029 217L1033 226ZM1020 240L1028 254L1015 254ZM1021 269L1034 271L1033 276ZM1014 324L1030 315L1013 331ZM1030 315L1028 337L1013 331ZM1016 343L1032 350L1015 364ZM1015 364L1025 369L1020 375ZM1017 389L1029 387L1020 398ZM1018 424L1024 440L1019 438ZM1019 438L1024 440L1014 445ZM1020 459L1030 461L1016 474ZM1030 461L1025 474L1016 474ZM1018 513L1029 516L1017 527ZM1017 527L1028 525L1013 538ZM1027 554L1034 568L1016 564ZM1013 602L1034 608L1014 615ZM1034 608L1027 614L1014 615ZM1029 634L1028 643L1017 649ZM1017 649L1028 643L1018 657ZM1028 254L1039 258L1040 273ZM1032 350L1038 342L1034 356ZM1034 356L1038 358L1046 376ZM1034 356L1046 376L1025 369ZM1025 369L1046 376L1044 390ZM1029 387L1044 390L1033 400ZM1033 400L1039 415L1030 414ZM1044 419L1044 436L1024 440ZM1025 498L1047 499L1029 516ZM1028 525L1037 541L1030 536ZM1034 568L1046 575L1033 580ZM1026 590L1041 596L1034 608ZM1027 614L1046 630L1029 634ZM1029 634L1044 649L1028 643ZM1026 666L1047 672L1040 686ZM1044 187L1050 206L1045 205ZM1045 205L1050 206L1042 213ZM1042 213L1059 217L1047 227ZM1047 227L1059 224L1052 242ZM1042 278L1054 281L1059 291ZM1042 278L1059 291L1039 293ZM1039 293L1059 291L1058 309ZM1039 293L1058 309L1044 311ZM1044 311L1058 323L1038 319ZM1038 358L1058 355L1046 376ZM1046 376L1052 381L1044 390ZM1044 390L1052 381L1050 399ZM1044 390L1050 399L1046 396ZM1044 419L1053 433L1044 436ZM1039 458L1057 462L1052 475ZM1052 475L1056 491L1047 485ZM1041 518L1058 526L1045 527ZM1045 527L1058 526L1037 541ZM1058 526L1056 540L1037 541ZM1037 541L1056 540L1041 558ZM1041 558L1057 551L1052 564ZM1046 575L1052 584L1056 591ZM1046 575L1056 591L1041 596ZM1041 596L1056 591L1054 611ZM1054 611L1055 616L1037 615ZM1037 615L1055 616L1058 634ZM1037 615L1058 634L1046 630ZM1046 630L1058 634L1060 641ZM1060 641L1055 661L1040 656ZM1040 656L1055 661L1047 672ZM1059 224L1066 245L1052 242ZM1059 291L1064 291L1066 308ZM1058 323L1070 317L1056 331ZM1053 433L1067 435L1066 455ZM1051 450L1066 455L1057 462ZM1066 455L1066 464L1057 462ZM1057 462L1066 464L1067 475ZM1057 511L1070 512L1063 532ZM1057 551L1067 558L1052 564ZM1068 564L1063 581L1052 584ZM1056 591L1069 597L1064 607ZM1056 591L1064 607L1054 611ZM1060 641L1068 649L1055 661ZM1073 204L1081 199L1072 215ZM1072 228L1085 230L1084 239ZM1084 252L1080 271L1069 269ZM1069 269L1080 271L1084 278ZM1069 269L1084 278L1065 280ZM1070 317L1077 317L1083 337ZM1063 331L1083 337L1070 343ZM1066 356L1084 354L1071 372ZM1084 354L1084 368L1071 372ZM1065 426L1080 436L1067 435ZM1066 464L1081 460L1067 475ZM1067 475L1081 486L1072 494ZM1072 494L1081 498L1067 499ZM1070 512L1077 527L1063 532ZM1081 536L1082 550L1067 558ZM1067 558L1082 550L1068 564ZM1063 581L1081 576L1081 592ZM1064 607L1086 602L1067 619ZM1067 619L1085 624L1064 630ZM1064 630L1083 635L1068 649ZM1081 199L1098 214L1085 215ZM1085 230L1094 246L1084 239ZM1080 271L1094 266L1084 278ZM1094 266L1089 278L1084 278ZM1078 293L1091 298L1081 306ZM1076 347L1095 345L1084 354ZM1084 354L1095 376L1084 368ZM1095 376L1090 390L1082 386ZM1093 440L1093 447L1076 451ZM1081 486L1095 494L1081 498ZM1077 527L1095 540L1081 536ZM1082 550L1094 558L1083 570ZM1094 558L1090 564L1083 570ZM1083 570L1090 564L1096 575ZM1083 570L1096 575L1081 576ZM1090 605L1091 620L1085 624ZM1095 645L1090 662L1081 663ZM1090 662L1091 667L1085 668ZM1111 193L1106 201L1097 200ZM1097 225L1108 228L1108 241ZM1094 266L1104 272L1089 278ZM1089 278L1102 281L1106 291ZM1102 402L1110 413L1097 409ZM1097 409L1102 427L1099 425ZM1093 440L1109 437L1093 447ZM1095 504L1109 505L1092 510ZM1092 510L1108 527L1089 524ZM1108 527L1110 541L1095 540ZM1096 575L1111 575L1089 592ZM1089 592L1105 590L1109 610ZM1090 662L1108 660L1109 676ZM1091 667L1109 676L1090 685ZM1108 241L1116 246L1111 257ZM1104 272L1116 272L1102 281ZM1103 310L1122 322L1102 321ZM1102 321L1122 322L1111 329ZM1122 322L1116 334L1111 329ZM1107 360L1123 363L1110 369ZM1116 395L1116 406L1110 413ZM1102 427L1123 427L1109 437ZM1123 427L1121 440L1109 437ZM1104 459L1116 459L1104 471ZM1116 459L1123 473L1104 471ZM1105 491L1118 488L1109 505ZM1105 555L1124 555L1112 564ZM1105 590L1120 603L1109 610ZM1111 630L1115 642L1104 649ZM1109 676L1115 671L1120 687ZM1109 676L1120 687L1107 687ZM1119 205L1131 206L1131 220ZM1121 214L1131 220L1131 226ZM1116 272L1129 271L1135 284ZM1118 277L1134 293L1115 289ZM1134 293L1132 306L1122 308ZM1122 322L1137 316L1116 334ZM1116 334L1137 328L1119 349ZM1116 395L1133 401L1136 412ZM1123 427L1131 422L1130 440ZM1121 440L1130 440L1121 448ZM1121 448L1135 452L1130 462ZM1116 459L1130 462L1136 477ZM1119 526L1135 531L1130 538ZM1124 555L1130 552L1115 566ZM1115 566L1131 577L1119 583ZM1115 642L1135 644L1123 663ZM1135 644L1130 659L1123 663ZM1123 663L1130 659L1129 668ZM1130 190L1145 193L1148 203ZM1148 203L1147 216L1131 220ZM1131 226L1145 244L1135 242ZM1135 284L1148 298L1134 293ZM1134 293L1148 298L1149 309ZM1134 293L1149 309L1132 306ZM1137 316L1150 322L1137 328ZM1147 333L1144 347L1130 344ZM1130 344L1144 347L1142 358ZM1130 344L1142 358L1137 359ZM1137 359L1142 358L1132 376ZM1131 422L1148 428L1143 439ZM1130 440L1143 439L1135 452ZM1129 489L1143 492L1150 502ZM1130 513L1142 516L1146 530ZM1130 513L1146 530L1135 531ZM1135 531L1146 530L1130 538ZM1146 530L1146 542L1130 538ZM1133 564L1145 571L1143 582ZM1133 564L1143 582L1131 577ZM1131 577L1143 582L1138 595ZM1129 611L1142 611L1129 618ZM1129 618L1144 631L1138 635ZM1135 644L1141 644L1130 659ZM1145 660L1145 669L1129 668ZM1145 193L1163 190L1148 203ZM1163 190L1156 206L1148 203ZM1156 206L1158 213L1147 216ZM1158 213L1155 232L1142 230ZM1142 230L1155 232L1162 243ZM1145 244L1162 243L1150 254ZM1150 254L1159 256L1156 273ZM1162 297L1159 305L1149 309ZM1144 347L1163 344L1158 357ZM1142 358L1158 357L1149 374ZM1145 398L1157 395L1157 411ZM1145 398L1157 411L1147 410ZM1147 410L1157 411L1158 425ZM1146 468L1155 466L1141 476ZM1143 492L1155 492L1150 502ZM1150 502L1160 497L1154 520ZM1142 516L1161 526L1146 530ZM1156 557L1157 564L1145 571ZM1143 582L1163 583L1156 597ZM1145 596L1156 597L1142 611ZM1160 609L1161 623L1145 615ZM1141 644L1156 647L1145 660ZM1156 647L1159 660L1145 660ZM1145 660L1158 675L1145 669ZM1172 199L1172 212L1158 213ZM1158 213L1172 212L1155 232ZM1162 243L1172 246L1159 256ZM1172 246L1167 258L1159 256ZM1156 273L1172 269L1158 282ZM1174 284L1171 293L1162 297ZM1177 303L1173 321L1159 316ZM1159 316L1173 321L1162 332ZM1162 332L1167 334L1174 350ZM1162 332L1174 350L1163 344ZM1174 350L1170 364L1158 357ZM1158 357L1170 364L1158 369ZM1154 387L1176 380L1174 399ZM1154 387L1174 399L1157 395ZM1157 411L1170 415L1158 425ZM1158 425L1171 424L1161 436ZM1171 464L1175 474L1163 479ZM1163 479L1175 474L1175 488ZM1160 497L1172 520L1154 520ZM1155 537L1170 555L1156 557ZM1157 564L1173 570L1163 583ZM1167 582L1176 593L1156 597ZM1162 635L1176 633L1156 647ZM1159 660L1176 659L1158 675ZM1176 659L1173 672L1158 675ZM1182 224L1188 246L1172 246ZM1174 284L1186 279L1171 293ZM1173 321L1181 334L1167 334ZM1167 334L1180 342L1174 350ZM1189 371L1180 384L1176 380ZM1176 380L1180 384L1186 402ZM1170 415L1184 420L1171 424ZM1171 424L1186 434L1172 440ZM1181 497L1187 512L1172 520ZM1172 520L1187 525L1174 531ZM1170 539L1181 544L1170 555ZM1187 563L1186 582L1167 582ZM1185 597L1183 611L1167 604ZM1174 648L1188 641L1183 660ZM1176 659L1183 660L1182 675ZM1182 675L1185 680L1174 685ZM1197 205L1194 219L1188 212ZM1188 246L1199 241L1187 254ZM1197 258L1202 271L1188 271ZM1202 271L1199 279L1186 279ZM1186 279L1199 279L1194 299ZM1194 299L1200 310L1183 306ZM1186 324L1196 321L1181 334ZM1197 363L1197 374L1189 371ZM1186 402L1201 396L1193 409ZM1184 420L1201 441L1186 434ZM1180 465L1201 467L1181 481ZM1202 492L1200 506L1181 497ZM1200 506L1196 511L1187 512ZM1186 582L1196 596L1185 597ZM1187 614L1194 622L1201 629ZM1187 614L1201 629L1180 634ZM1194 219L1210 216L1207 224ZM1197 230L1207 224L1199 241ZM1207 224L1216 241L1199 241ZM1199 241L1216 241L1197 258ZM1216 241L1207 256L1197 258ZM1197 258L1207 256L1202 271ZM1194 299L1211 289L1200 310ZM1199 344L1214 345L1215 362ZM1197 363L1215 362L1214 377ZM1197 363L1214 377L1197 374ZM1209 380L1208 395L1201 396ZM1201 396L1208 395L1207 407ZM1207 407L1212 428L1197 425ZM1212 428L1211 441L1201 441ZM1201 441L1215 446L1193 453ZM1201 467L1212 462L1199 474ZM1200 506L1212 507L1196 511ZM1195 544L1208 549L1202 551ZM1208 549L1209 566L1199 569ZM1201 606L1212 624L1194 622ZM1194 622L1212 624L1201 629ZM1201 629L1207 628L1199 649ZM1214 649L1213 656L1202 658ZM1202 658L1212 674L1198 672ZM1207 224L1226 224L1226 239ZM1216 241L1226 239L1219 259ZM1207 256L1219 259L1214 265ZM1221 272L1228 285L1212 279ZM1212 279L1220 293L1211 289ZM1211 289L1220 293L1206 312ZM1206 312L1227 321L1215 320ZM1212 331L1224 331L1227 346ZM1214 345L1227 346L1225 355ZM1215 362L1221 368L1214 377ZM1209 380L1226 386L1208 395ZM1208 395L1220 402L1222 410ZM1207 407L1221 422L1212 428ZM1215 446L1221 450L1222 467ZM1212 462L1222 467L1220 481ZM1207 481L1220 481L1220 493ZM1213 514L1224 513L1222 525ZM1222 525L1223 546L1216 546ZM1216 546L1229 558L1208 549ZM1229 601L1227 617L1212 624ZM1212 624L1227 617L1207 628ZM1221 657L1228 668L1212 674ZM1233 212L1238 229L1226 224ZM1226 224L1238 229L1235 239ZM1226 239L1235 239L1238 257ZM1226 239L1238 257L1219 259ZM1238 257L1240 269L1221 272ZM1221 272L1240 269L1228 285ZM1220 293L1239 293L1220 311ZM1224 331L1240 337L1237 341ZM1224 331L1237 341L1227 346ZM1237 341L1241 359L1225 355ZM1226 386L1234 388L1220 402ZM1233 452L1240 467L1222 467ZM1220 481L1235 478L1236 492ZM1226 499L1242 515L1224 513ZM1237 536L1242 551L1229 558ZM1229 558L1242 551L1220 565ZM1242 551L1234 563L1220 565ZM1235 583L1232 589L1226 591ZM1220 627L1239 641L1227 645ZM1234 193L1249 199L1239 200ZM1249 199L1251 220L1233 212ZM1233 212L1251 220L1238 229ZM1251 220L1246 230L1238 229ZM1234 277L1253 281L1249 298ZM1240 318L1247 318L1240 337ZM1240 337L1249 338L1237 341ZM1249 338L1253 350L1237 341ZM1237 341L1253 350L1241 359ZM1241 359L1253 362L1241 370ZM1253 362L1246 372L1241 370ZM1234 388L1255 389L1236 395ZM1236 412L1251 410L1232 424ZM1233 452L1255 466L1240 467ZM1255 466L1254 477L1235 478ZM1242 551L1251 552L1234 563ZM1251 552L1250 566L1234 563ZM1255 619L1248 632L1238 632ZM1238 632L1250 641L1239 641ZM1239 641L1246 654L1241 660ZM1249 199L1266 204L1264 218ZM1249 199L1264 218L1251 220ZM1251 220L1260 231L1246 230ZM1253 281L1260 281L1262 295ZM1253 281L1262 295L1249 298ZM1253 305L1258 306L1267 317ZM1253 350L1261 362L1253 362ZM1261 362L1260 368L1246 372ZM1246 372L1260 368L1267 384ZM1255 389L1267 384L1259 397ZM1251 410L1259 421L1250 420ZM1250 420L1259 421L1249 437ZM1259 421L1268 439L1249 437ZM1245 446L1260 448L1262 465ZM1254 477L1264 479L1266 489ZM1254 497L1265 504L1251 513ZM1251 552L1267 549L1266 568ZM1251 552L1266 568L1250 566ZM1255 578L1264 592L1248 594ZM1248 594L1264 592L1246 607ZM1264 592L1266 610L1246 607ZM1259 190L1276 189L1273 201ZM1260 231L1277 225L1263 242ZM1277 225L1280 240L1263 242ZM1264 255L1279 258L1281 265ZM1258 306L1277 307L1267 317ZM1276 338L1276 346L1261 351ZM1275 373L1275 389L1267 384ZM1259 421L1277 441L1268 439ZM1262 465L1275 464L1281 474ZM1265 504L1281 518L1266 515ZM1266 515L1281 518L1276 524ZM1279 559L1280 566L1266 568ZM1266 568L1280 566L1273 578ZM1264 592L1276 593L1266 610ZM1264 618L1277 620L1275 637ZM1275 637L1277 640L1265 643ZM1292 277L1285 291L1271 289ZM1277 307L1289 310L1280 323ZM1276 338L1292 344L1276 346ZM1276 346L1292 344L1291 358ZM1272 410L1285 428L1275 425ZM1275 425L1290 442L1277 441ZM1290 442L1288 451L1281 450ZM1275 464L1293 480L1281 474ZM1280 543L1286 540L1279 559ZM1286 540L1291 551L1279 559ZM1291 551L1287 571L1280 566ZM1273 603L1294 617L1277 620ZM1277 620L1294 617L1290 628ZM1277 620L1290 628L1275 637ZM1277 640L1289 644L1275 661ZM1289 644L1288 654L1275 661ZM1274 673L1285 674L1288 681ZM1274 673L1288 681L1271 682ZM1291 200L1299 198L1289 217ZM1304 214L1299 231L1287 230ZM1287 230L1299 231L1289 247ZM1290 254L1301 271L1285 265ZM1301 271L1305 278L1292 277ZM1292 277L1305 278L1301 296ZM1301 296L1301 312L1289 310ZM1285 328L1302 342L1292 344ZM1292 344L1304 357L1291 358ZM1291 358L1304 357L1286 370ZM1304 357L1306 373L1286 370ZM1285 389L1303 395L1290 396ZM1285 428L1300 440L1290 442ZM1286 458L1303 461L1293 480ZM1287 493L1299 493L1300 504ZM1287 493L1300 504L1292 500ZM1286 540L1300 537L1291 551ZM1300 537L1300 551L1291 551ZM1289 583L1300 579L1286 590ZM1288 603L1298 617L1294 617ZM1298 617L1297 634L1290 628ZM1290 628L1297 634L1304 644ZM1290 628L1304 644L1289 644ZM1285 674L1304 668L1288 681ZM1304 668L1305 683L1288 681ZM1299 188L1316 187L1299 198ZM1316 187L1311 207L1299 198ZM1299 198L1311 207L1304 214ZM1298 240L1312 239L1305 251ZM1301 271L1316 278L1305 278ZM1299 325L1314 322L1313 328ZM1313 328L1318 349L1302 342ZM1306 373L1310 382L1301 382ZM1311 401L1312 415L1306 407ZM1306 407L1312 415L1317 420ZM1317 436L1317 453L1301 452ZM1301 452L1313 459L1303 461ZM1319 475L1319 491L1299 493ZM1301 528L1314 541L1300 537ZM1319 550L1318 562L1298 569ZM1300 579L1313 593L1306 596ZM1306 610L1320 607L1315 616ZM1298 617L1315 616L1297 634ZM1314 642L1313 654L1301 660ZM1328 189L1332 202L1311 207ZM1311 207L1326 220L1317 218ZM1312 239L1326 245L1313 254ZM1310 266L1325 270L1316 278ZM1316 278L1329 281L1318 295ZM1317 305L1324 305L1314 322ZM1313 354L1327 355L1319 373ZM1327 355L1326 372L1319 373ZM1326 372L1327 382L1310 382ZM1317 436L1333 438L1317 453ZM1317 453L1324 450L1313 459ZM1327 460L1328 471L1319 475ZM1332 490L1329 506L1317 505ZM1316 515L1325 524L1311 530ZM1311 530L1325 524L1314 541ZM1314 541L1323 544L1331 552ZM1318 562L1325 568L1331 584ZM1331 584L1325 596L1313 593ZM1320 607L1331 608L1315 616ZM1326 616L1331 630L1311 631ZM1311 631L1327 646L1314 642ZM1314 642L1327 646L1327 661ZM1317 673L1325 666L1329 685ZM1332 202L1345 207L1341 216ZM1332 202L1341 216L1326 220ZM1337 276L1340 291L1331 297ZM1331 297L1340 291L1324 305ZM1327 317L1344 324L1344 332ZM1339 348L1341 358L1327 355ZM1324 426L1338 433L1333 438ZM1333 438L1339 450L1324 450ZM1324 450L1339 450L1327 460ZM1327 460L1346 467L1328 471ZM1325 568L1339 571L1331 584ZM1331 584L1336 577L1325 596ZM1331 608L1337 608L1326 616ZM1326 616L1340 620L1340 632ZM1331 630L1340 632L1327 646ZM1342 644L1337 655L1327 661ZM1345 671L1337 688L1329 685ZM1342 238L1355 251L1343 252ZM1340 273L1353 264L1353 285ZM1337 276L1355 296L1340 291ZM1341 358L1359 360L1339 371ZM1357 368L1357 381L1343 388ZM1338 433L1356 436L1358 451ZM1338 433L1358 451L1339 450ZM1358 480L1351 491L1346 490ZM1346 490L1351 491L1344 498ZM1344 498L1352 505L1356 518ZM1356 549L1355 563L1339 571ZM1339 571L1355 563L1336 577ZM1336 577L1354 583L1350 597ZM1350 597L1356 604L1337 608ZM1340 632L1357 633L1350 640ZM1345 671L1352 686L1337 688ZM1355 296L1369 293L1367 304ZM1359 322L1370 319L1371 334ZM1359 322L1371 334L1350 336ZM1350 336L1371 334L1353 343ZM1353 343L1363 344L1364 363ZM1353 343L1364 363L1359 360ZM1359 360L1364 363L1368 367ZM1359 360L1368 367L1357 368ZM1351 397L1367 399L1366 410ZM1351 397L1366 410L1349 412ZM1349 412L1362 425L1351 422ZM1358 451L1367 455L1358 464ZM1367 455L1362 459L1358 464ZM1358 464L1362 459L1358 480ZM1351 491L1365 503L1352 505ZM1356 518L1367 520L1350 527ZM1367 520L1372 523L1350 527ZM1354 583L1366 578L1350 597ZM1365 622L1369 632L1357 633ZM1350 661L1363 669L1351 672Z" fill="#000000" opacity="0.025"/></g>

</svg>

<!-- view cube -->
<svg style="left:0;top:0" width="1911" height="1020">
  <path d="M455.3 922.4L520 921.8L524.7 944L524.8 1003.5L460 1004L455.3 999z" fill="#c5c5c5"/>
  <path d="M455.3 922.4L520 921.8L524.7 939.5L460 939.5z" fill="#cacaca"/>
  <path d="M460 939.5h64.7" stroke="#d0d0d0" stroke-width="1"/>
  <clipPath id="topclip"><rect x="460" y="925" width="64" height="12.5"/></clipPath>
  <text x="479.5" y="943" font-family="Liberation Sans" font-size="12.5" fill="#3a3a3a" clip-path="url(#topclip)" textLength="24" lengthAdjust="spacingAndGlyphs">Top</text>
  <path d="M458 977l4 6M462 977l-4 6M460 980v8" stroke="#70b870" stroke-width="1" fill="none"/>
  <path d="M460.3 1004V950" stroke="#7474c4" stroke-width="3"/>
  <path d="M454.5 951.5L460.3 939L466.3 951.5z" fill="#7474c4"/>
  <path d="M460 1003.8H519" stroke="#cf7a7a" stroke-width="3"/>
  <path d="M517.5 998L529 1003.5L517.5 1009.5z" fill="#cf7a7a"/>
  <path d="M452.5 977l4.5 10 1.5-5z" fill="#70b870"/>
  <text x="456" y="931" font-family="Liberation Sans" font-size="8" fill="#7070c0">Z</text>
  <text x="538.5" y="1008.5" font-family="Liberation Sans" font-size="8.5" fill="#cc7070">X</text>
</svg>
<div class="t" style="left:477px;top:968.84px;font-size:12px;color:#444;">Front</div>


<!-- warning -->
<div class="a" style="left:1535.3px;top:943.3px;width:373.5px;height:73.7px;border-radius:5px;background:#fffdf9;border:1px solid #f2d9c2;overflow:hidden">
  <div class="a" style="left:0;top:0;width:8.2px;height:74px;background:#f5a65e"></div>
</div>
<div class="a" style="left:1883px;top:951px;width:18.5px;height:18px;border-radius:2px;background:#ececec"></div>
<div class="a" style="left:1889px;top:997.5px;width:12.5px;height:11.5px;border-radius:2px;background:#ececec"></div>
<svg style="left:0;top:0" width="1911" height="1020" fill="none">
  <path d="M1886.5 954.5l11 11M1897.5 954.5l-11 11" stroke="#444" stroke-width="1.1"/>
  <path d="M1891.5 1003.5h7" stroke="#444" stroke-width="1.1"/>
  <path d="M1621 1009h207" stroke="#2f86b5" stroke-width="1"/>
</svg>
<div class="t" style="left:1550px;top:950.70px;font-size:13px;color:#333;letter-spacing:0.1px;">Warning:</div>

<div class="t" style="left:1550px;top:966.00px;font-size:13px;color:#333;letter-spacing:0.1px;">It seems object skullbowlfinal_lowpoly.stl has floating</div>

<div class="t" style="left:1550px;top:981.00px;font-size:13px;color:#333;letter-spacing:0.12px;">regions. Please re-orient the object or enable support</div>

<div class="t" style="left:1550px;top:996.00px;font-size:13px;color:#333;letter-spacing:0.1px;">generation. <span style="color:#2f86b5">Jump to [skullbowlfinal_lowpoly.stl]</span></div>

</body></html>
